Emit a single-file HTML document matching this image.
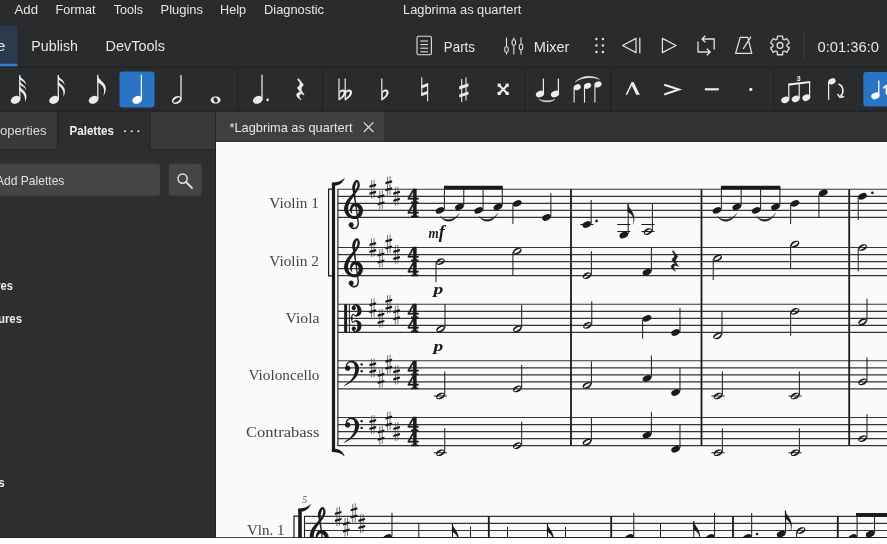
<!DOCTYPE html>
<html lang="en"><head><meta charset="utf-8"><title>Lagbrima as quartert</title>
<style>
html,body{margin:0;padding:0;}
body{width:887px;height:544px;overflow:hidden;background:#fff;position:relative;font-family:"Liberation Sans",sans-serif;}
#app{position:absolute;left:0;top:0;width:887px;height:538px;background:#2a2b2d;overflow:hidden;}
.abs{position:absolute;}
.t{position:absolute;white-space:nowrap;color:#e4e4e4;line-height:1;}
#page{position:absolute;left:215.5px;top:141.5px;width:672px;height:397px;background:#fafafa;}
svg{position:absolute;left:0;top:0;filter:blur(0.4px);}
</style></head><body>
<div id="app">
<div id="page"></div>
<svg width="887" height="544" viewBox="0 0 887 544">
<text x="14.5" y="13.8" font-family="'Liberation Sans', sans-serif" font-size="12.4" font-weight="400" fill="#e6e6e6" textLength="23.5" lengthAdjust="spacingAndGlyphs">Add</text>
<text x="55.5" y="13.8" font-family="'Liberation Sans', sans-serif" font-size="12.4" font-weight="400" fill="#e6e6e6" textLength="40" lengthAdjust="spacingAndGlyphs">Format</text>
<text x="113.8" y="13.8" font-family="'Liberation Sans', sans-serif" font-size="12.4" font-weight="400" fill="#e6e6e6" textLength="29.2" lengthAdjust="spacingAndGlyphs">Tools</text>
<text x="160.5" y="13.8" font-family="'Liberation Sans', sans-serif" font-size="12.4" font-weight="400" fill="#e6e6e6" textLength="42.5" lengthAdjust="spacingAndGlyphs">Plugins</text>
<text x="220" y="13.8" font-family="'Liberation Sans', sans-serif" font-size="12.4" font-weight="400" fill="#e6e6e6" textLength="26" lengthAdjust="spacingAndGlyphs">Help</text>
<text x="264" y="13.8" font-family="'Liberation Sans', sans-serif" font-size="12.4" font-weight="400" fill="#e6e6e6" textLength="60" lengthAdjust="spacingAndGlyphs">Diagnostic</text>
<text x="403" y="13.8" font-family="'Liberation Sans', sans-serif" font-size="12.4" font-weight="400" fill="#e6e6e6" textLength="118.3" lengthAdjust="spacingAndGlyphs">Lagbrima as quartert</text>
<rect x="0" y="26" width="17.5" height="40.5" fill="#2b3a4c"/>
<rect x="0" y="63.7" width="17.5" height="2.8" fill="#2f7fd6"/>
<text x="-40.5" y="51.3" font-family="'Liberation Sans', sans-serif" font-size="15" font-weight="400" fill="#e6e6e6" textLength="46" lengthAdjust="spacingAndGlyphs">Score</text>
<text x="31.3" y="51.3" font-family="'Liberation Sans', sans-serif" font-size="15" font-weight="400" fill="#e6e6e6" textLength="46.7" lengthAdjust="spacingAndGlyphs">Publish</text>
<text x="105.5" y="51.3" font-family="'Liberation Sans', sans-serif" font-size="15" font-weight="400" fill="#e6e6e6" textLength="59.5" lengthAdjust="spacingAndGlyphs">DevTools</text>
<text x="443.8" y="51.6" font-family="'Liberation Sans', sans-serif" font-size="14.5" font-weight="400" fill="#e6e6e6" textLength="31.2" lengthAdjust="spacingAndGlyphs">Parts</text>
<text x="533.8" y="51.6" font-family="'Liberation Sans', sans-serif" font-size="14.5" font-weight="400" fill="#e6e6e6" textLength="35.7" lengthAdjust="spacingAndGlyphs">Mixer</text>
<text x="817.5" y="51.7" font-family="'Liberation Sans', sans-serif" font-size="14.5" font-weight="400" fill="#e6e6e6" textLength="61.5" lengthAdjust="spacingAndGlyphs">0:01:36:0</text>
<rect x="0" y="66.6" width="887" height="1" fill="#222324"/>
<rect x="0" y="110.6" width="887" height="1.2" fill="#1f2021"/>
<rect x="803.6" y="32" width="1" height="27" fill="#3d3e40"/>
<rect x="237.5" y="68" width="1" height="42.5" fill="#1f2021"/>
<rect x="322" y="68" width="1" height="42.5" fill="#1f2021"/>
<rect x="524.5" y="68" width="1" height="42.5" fill="#1f2021"/>
<rect x="610.3" y="68" width="1" height="42.5" fill="#1f2021"/>
<rect x="773.5" y="68" width="1" height="42.5" fill="#1f2021"/>
<rect x="119.5" y="71.5" width="35" height="36" fill="#2a74c5" rx="3"/>
<rect x="863.3" y="72" width="30" height="34.5" fill="#2a74c5" rx="3"/>
<rect x="0" y="111.8" width="215.5" height="427" fill="#2d2e30"/>
<rect x="0" y="111.8" width="57.5" height="37.7" fill="#37393a"/>
<rect x="150" y="111.8" width="65.5" height="37.7" fill="#37393a"/>
<rect x="0" y="149.5" width="57.5" height="1" fill="#222324"/>
<rect x="150" y="149.5" width="65.5" height="1" fill="#222324"/>
<rect x="57" y="111.8" width="1" height="38" fill="#222324"/>
<rect x="149.5" y="111.8" width="1" height="38" fill="#222324"/>
<text x="-13.1" y="134.6" font-family="'Liberation Sans', sans-serif" font-size="12.4" font-weight="400" fill="#dcdcdc" textLength="59.6" lengthAdjust="spacingAndGlyphs">Properties</text>
<text x="69.5" y="134.6" font-family="'Liberation Sans', sans-serif" font-size="12.4" font-weight="700" fill="#f2f2f2" textLength="44.5" lengthAdjust="spacingAndGlyphs">Palettes</text>
<circle cx="125" cy="131.3" r="1.05" fill="#e0e0e0"/>
<circle cx="131.75" cy="131.3" r="1.05" fill="#e0e0e0"/>
<circle cx="138.4" cy="131.3" r="1.05" fill="#e0e0e0"/>
<rect x="-5" y="163.8" width="165" height="32" fill="#434547" rx="3"/>
<rect x="168.8" y="163.8" width="33" height="32" fill="#434547" rx="3"/>
<text x="-4" y="184.5" font-family="'Liberation Sans', sans-serif" font-size="12.4" font-weight="400" fill="#e0e0e0" textLength="68.4" lengthAdjust="spacingAndGlyphs">Add Palettes</text>
<circle cx="182.6" cy="178.6" r="4.6" fill="none" stroke="#e0e0e0" stroke-width="1.5"/><line x1="186" y1="182" x2="192" y2="188" stroke="#e0e0e0" stroke-width="1.8" stroke-linecap="round"/>
<rect x="215.5" y="111.8" width="672" height="29.7" fill="#303133"/>
<rect x="215.5" y="111.8" width="168.8" height="29.7" fill="#3e3f41"/>
<rect x="215" y="111.8" width="1" height="426" fill="#222324"/>
<text x="229.5" y="131.8" font-family="'Liberation Sans', sans-serif" font-size="12.4" font-weight="400" fill="#e6e6e6" textLength="123" lengthAdjust="spacingAndGlyphs">*Lagbrima as quartert</text>
<path d="M363.8 122.4 L373.4 132 M373.4 122.4 L363.8 132" stroke="#dcdcdc" stroke-width="1.2" fill="none"/>
<text x="-67" y="290.4" font-family="'Liberation Sans', sans-serif" font-size="12.4" font-weight="700" fill="#ececec" textLength="80" lengthAdjust="spacingAndGlyphs">Key signatures</text>
<text x="-65" y="323.2" font-family="'Liberation Sans', sans-serif" font-size="12.4" font-weight="700" fill="#ececec" textLength="87" lengthAdjust="spacingAndGlyphs">Time signatures</text>
<text x="-66" y="487.4" font-family="'Liberation Sans', sans-serif" font-size="12.4" font-weight="700" fill="#ececec" textLength="70.8" lengthAdjust="spacingAndGlyphs">Articulations</text>
<ellipse cx="15.6" cy="99.8" rx="5.1" ry="3.7" transform="rotate(-24 15.6 99.8)" fill="#ececec"/>
<line x1="19.8" y1="98.6" x2="19.8" y2="75" stroke="#ececec" stroke-width="1.25"/>
<path d="M19.3 75 C20.2 78.2 25.8 79.6 26.2 85 C25 82.6 22.4 80.6 19.3 79.2 Z" fill="#ececec"/>
<path d="M19.3 80.4 C20.2 83.6 25.8 85 26.2 90.4 C25 88 22.4 86 19.3 84.6 Z" fill="#ececec"/>
<path d="M19.3 85.8 C20.2 89.2 27.2 91.2 26.4 97.3 C26.2 99.3 25.6 100.8 24.8 102.3 C25.8 97.3 23.8 92.8 19.3 90.4 Z" fill="#ececec"/>
<ellipse cx="54.1" cy="99.8" rx="5.1" ry="3.7" transform="rotate(-24 54.1 99.8)" fill="#ececec"/>
<line x1="58.3" y1="98.6" x2="58.3" y2="75" stroke="#ececec" stroke-width="1.25"/>
<path d="M57.8 75 C58.7 78.2 64.3 79.6 64.7 85 C63.5 82.6 60.9 80.6 57.8 79.2 Z" fill="#ececec"/>
<path d="M57.8 80.4 C58.7 83.8 65.7 85.8 64.9 91.9 C64.7 93.9 64.1 95.4 63.3 96.9 C64.3 91.9 62.3 87.4 57.8 85 Z" fill="#ececec"/>
<ellipse cx="93.6" cy="99.8" rx="5.1" ry="3.7" transform="rotate(-24 93.6 99.8)" fill="#ececec"/>
<line x1="97.8" y1="98.6" x2="97.8" y2="74.8" stroke="#ececec" stroke-width="1.25"/>
<path d="M97.3 74.8 C98.4 80.3 106.6 82.8 105.8 89.3 C105.6 92.3 104.4 94.3 103.2 96.3 C104.8 91.3 104.4 87.3 101.2 84.8 C99.8 83.6 98.4 83 97.3 82.6 Z" fill="#ececec"/>
<ellipse cx="137.2" cy="99.8" rx="5.1" ry="3.7" transform="rotate(-24 137.2 99.8)" fill="#ffffff"/>
<line x1="141.4" y1="98.6" x2="141.4" y2="74.8" stroke="#ffffff" stroke-width="1.25"/>
<path d="M181.46 97.93 181.7 99.07 181.45 100.31 180.76 101.52 179.67 102.57 178.3 103.38 176.79 103.86 175.28 103.95 173.92 103.66 172.83 103.02 172.14 102.07 171.9 100.93 172.15 99.69 172.84 98.48 173.93 97.43 175.3 96.62 176.81 96.14 178.32 96.05 179.68 96.34 180.77 96.98ZM179.74 97.56 179.01 97.46 178.07 97.62 177 98.01 175.92 98.59 174.92 99.31 174.1 100.1 173.55 100.88 173.32 101.57 173.43 102.11 173.86 102.44 174.59 102.54 175.53 102.38 176.6 101.99 177.68 101.41 178.68 100.69 179.5 99.9 180.05 99.12 180.28 98.43 180.17 97.89Z" fill="#ececec" fill-rule="evenodd"/>
<line x1="181" y1="98.8" x2="181" y2="75" stroke="#ececec" stroke-width="1.25"/>
<path d="M220.6 100 220.36 101.11 219.65 102.12 218.54 102.91 217.15 103.42 215.6 103.6 214.05 103.42 212.66 102.91 211.55 102.12 210.84 101.11 210.6 100 210.84 98.89 211.55 97.88 212.66 97.09 214.05 96.58 215.6 96.4 217.15 96.58 218.54 97.09 219.65 97.88 220.36 98.89ZM216.75 98.37 216.14 97.86 215.47 97.55 214.82 97.48 214.25 97.66 213.81 98.07 213.54 98.67 213.48 99.39 213.62 100.18 213.95 100.95 214.45 101.63 215.06 102.14 215.73 102.45 216.38 102.52 216.95 102.34 217.39 101.93 217.66 101.33 217.72 100.61 217.58 99.82 217.25 99.05Z" fill="#ececec" fill-rule="evenodd"/>
<ellipse cx="257.8" cy="99.8" rx="5.1" ry="3.7" transform="rotate(-24 257.8 99.8)" fill="#ececec"/>
<line x1="262" y1="98.6" x2="262" y2="74.8" stroke="#ececec" stroke-width="1.25"/>
<circle cx="267.6" cy="99.9" r="1.3" fill="#ececec"/>
<path d="M298.39 78.6 L303.36 84.63 L301.37 87.47 L301.09 89.96 L304.07 94.93 L301.51 93.65 L299.1 94.93 L299.38 97.2 L301.09 99.9 L297.25 96.92 L296.54 94.22 L298.53 92.44 L300.8 92.66 L297.25 87.83 L299.95 84.99 L300.09 83 L297.68 79.31Z" fill="#ececec" stroke="#ececec" stroke-width="0.7" stroke-linejoin="round"/>
<path d="M339 78.6 V100.2" stroke="#ececec" stroke-width="1.2" fill="none"/>
<path d="M339.3 91.6 C342 88.4 346 89.2 345.8 92.8 C345.6 96.2 341.8 98.6 339.3 100.4 Z M339.9 93 V98 C342 96.4 343.6 94.8 343.6 92.6 C343.6 90.8 341.6 91.2 339.9 93 Z" fill="#ececec" fill-rule="evenodd"/>
<path d="M345.2 78.6 V100.2" stroke="#ececec" stroke-width="1.2" fill="none"/>
<path d="M345.5 91.6 C348.2 88.4 352.2 89.2 352 92.8 C351.8 96.2 348 98.6 345.5 100.4 Z M346.1 93 V98 C348.2 96.4 349.8 94.8 349.8 92.6 C349.8 90.8 347.8 91.2 346.1 93 Z" fill="#ececec" fill-rule="evenodd"/>
<path d="M381.8 78.6 V100.2" stroke="#ececec" stroke-width="1.2" fill="none"/>
<path d="M382.1 91.6 C384.8 88.4 388.8 89.2 388.6 92.8 C388.4 96.2 384.6 98.6 382.1 100.4 Z M382.7 93 V98 C384.8 96.4 386.4 94.8 386.4 92.6 C386.4 90.8 384.4 91.2 382.7 93 Z" fill="#ececec" fill-rule="evenodd"/>
<path d="M421.8 77.5 V95.6 M427.6 83.2 V101.3" stroke="#ececec" stroke-width="1.1" fill="none"/>
<path d="M421.3 85.4 L428.1 83 V86 L421.3 88.4 Z M421.3 93.2 L428.1 90.8 V93.8 L421.3 96.2 Z" fill="#ececec"/>
<path d="M461.7 79 V102 M466 77.6 V100.6" stroke="#ececec" stroke-width="1.1" fill="none"/>
<path d="M459.2 86.2 L468.5 83.2 V86.4 L459.2 89.4 Z M459.2 94.4 L468.5 91.4 V94.6 L459.2 97.6 Z" fill="#ececec"/>
<path d="M499.4 85.4 L507 93.2 M507 85.4 L499.4 93.2" stroke="#ececec" stroke-width="2.1" fill="none"/>
<rect x="497.6" y="83.6" width="3.2" height="3.2" fill="#ececec"/>
<rect x="505.6" y="83.6" width="3.2" height="3.2" fill="#ececec"/>
<rect x="497.6" y="91.8" width="3.2" height="3.2" fill="#ececec"/>
<rect x="505.6" y="91.8" width="3.2" height="3.2" fill="#ececec"/>
<ellipse cx="540" cy="94" rx="4.3" ry="3.1" transform="rotate(-24 540 94)" fill="#ececec"/>
<line x1="543.4" y1="92.8" x2="543.4" y2="78.6" stroke="#ececec" stroke-width="1.25"/>
<ellipse cx="555" cy="94" rx="4.3" ry="3.1" transform="rotate(-24 555 94)" fill="#ececec"/>
<line x1="558.4" y1="92.8" x2="558.4" y2="78.6" stroke="#ececec" stroke-width="1.25"/>
<path d="M539 99.2 C543 102.6 551 102.6 555 99.2 C551 101.4 543 101.4 539 99.2 Z" fill="#ececec" stroke="#ececec" stroke-width="0.5"/>
<ellipse cx="577.2" cy="87.2" rx="3.7" ry="2.8" transform="rotate(-24 577.2 87.2)" fill="#ececec"/>
<line x1="574.1" y1="88.2" x2="574.1" y2="102.6" stroke="#ececec" stroke-width="1.1"/>
<ellipse cx="587.6" cy="85.8" rx="3.7" ry="2.8" transform="rotate(-24 587.6 85.8)" fill="#ececec"/>
<line x1="584.5" y1="86.8" x2="584.5" y2="102.6" stroke="#ececec" stroke-width="1.1"/>
<ellipse cx="598" cy="84.4" rx="3.7" ry="2.8" transform="rotate(-24 598 84.4)" fill="#ececec"/>
<line x1="594.9" y1="85.4" x2="594.9" y2="102.6" stroke="#ececec" stroke-width="1.1"/>
<path d="M575.2 82 C581 75.4 593 74.6 599.4 79.4 C593 76.4 581 77.2 575.2 82 Z" fill="#ececec" stroke="#ececec" stroke-width="0.4"/>
<path d="M625.6 94.8 L631.6 82 H633.6 L639.8 94.8 H636.2 L631.8 85.6 L627.2 94.8 Z" fill="#ececec"/>
<path d="M664.2 84.8 L678.8 89.6 L664.2 94.4" stroke="#ececec" stroke-width="2.1" fill="none" stroke-linejoin="miter"/>
<rect x="704.8" y="88.2" width="14" height="2.2" fill="#ececec"/>
<circle cx="750.8" cy="89.4" r="1.65" fill="#ececec"/>
<ellipse cx="785.2" cy="99.9" rx="4.1" ry="3.1" transform="rotate(-24 785.2 99.9)" fill="#ececec"/>
<ellipse cx="795.7" cy="98.9" rx="4.1" ry="3.1" transform="rotate(-24 795.7 98.9)" fill="#ececec"/>
<ellipse cx="806.3" cy="97.7" rx="4.1" ry="3.1" transform="rotate(-24 806.3 97.7)" fill="#ececec"/>
<line x1="788.8" y1="99.2" x2="788.8" y2="84.6" stroke="#ececec" stroke-width="1.2"/>
<line x1="799.2" y1="98.2" x2="799.2" y2="83.3" stroke="#ececec" stroke-width="1.2"/>
<line x1="809.6" y1="97" x2="809.6" y2="82" stroke="#ececec" stroke-width="1.2"/>
<path d="M788.2 83.6 L810.2 80.9 V83.1 L788.2 85.8 Z" fill="#ececec"/>
<text x="796.4" y="80.6" font-family="'Liberation Sans', sans-serif" font-size="7.6" font-weight="700" fill="#ececec">3</text>
<ellipse cx="832" cy="81.3" rx="3.8" ry="2.9" transform="rotate(-24 832 81.3)" fill="#ececec"/>
<line x1="828.6" y1="82" x2="828.6" y2="99.8" stroke="#ececec" stroke-width="1.25"/>
<path d="M838.4 84 C843.6 86 844.4 92.6 840.4 96.6" stroke="#ececec" stroke-width="1.5" fill="none"/><path d="M837.6 94 L840 97.4 L844.2 96.6" stroke="#ececec" stroke-width="1.5" fill="none"/>
<ellipse cx="875.4" cy="95.8" rx="4.3" ry="3.2" transform="rotate(-24 875.4 95.8)" fill="#ffffff"/>
<line x1="878.8" y1="94.6" x2="878.8" y2="80.4" stroke="#ffffff" stroke-width="1.25"/>
<path d="M886.4 85 V94.5 M883.2 88.4 L886.4 85.2" stroke="#ffffff" stroke-width="1.5" fill="none"/>
<rect x="417" y="36.2" width="14.4" height="18.6" rx="1.6" fill="none" stroke="#e0e0e0" stroke-width="1.1"/>
<line x1="420.4" y1="41" x2="428" y2="41" stroke="#e0e0e0" stroke-width="1.1"/>
<line x1="420.4" y1="44.6" x2="428" y2="44.6" stroke="#e0e0e0" stroke-width="1.1"/>
<line x1="420.4" y1="48.2" x2="428" y2="48.2" stroke="#e0e0e0" stroke-width="1.1"/>
<line x1="420.4" y1="51.8" x2="428" y2="51.8" stroke="#e0e0e0" stroke-width="1.1"/>
<line x1="506.5" y1="37.6" x2="506.5" y2="46.9" stroke="#e0e0e0" stroke-width="1.1"/><line x1="506.5" y1="52.1" x2="506.5" y2="54.6" stroke="#e0e0e0" stroke-width="1.1"/><rect x="504.8" y="46.7" width="3.4" height="5.6" rx="1.6" fill="none" stroke="#e0e0e0" stroke-width="1.1"/>
<line x1="513.8" y1="37.6" x2="513.8" y2="39.9" stroke="#e0e0e0" stroke-width="1.1"/><line x1="513.8" y1="45.1" x2="513.8" y2="54.6" stroke="#e0e0e0" stroke-width="1.1"/><rect x="512.0999999999999" y="39.7" width="3.4" height="5.6" rx="1.6" fill="none" stroke="#e0e0e0" stroke-width="1.1"/>
<line x1="521" y1="37.6" x2="521" y2="44.4" stroke="#e0e0e0" stroke-width="1.1"/><line x1="521" y1="49.6" x2="521" y2="54.6" stroke="#e0e0e0" stroke-width="1.1"/><rect x="519.3" y="44.2" width="3.4" height="5.6" rx="1.6" fill="none" stroke="#e0e0e0" stroke-width="1.1"/>
<circle cx="596.4" cy="39" r="1.2" fill="#e0e0e0"/>
<circle cx="596.4" cy="45.5" r="1.2" fill="#e0e0e0"/>
<circle cx="596.4" cy="52" r="1.2" fill="#e0e0e0"/>
<circle cx="602.9" cy="39" r="1.2" fill="#e0e0e0"/>
<circle cx="602.9" cy="45.5" r="1.2" fill="#e0e0e0"/>
<circle cx="602.9" cy="52" r="1.2" fill="#e0e0e0"/>
<path d="M636 38.4 L622.6 45.5 L636 52.6 Z" fill="none" stroke="#e0e0e0" stroke-width="1.25" stroke-linejoin="round"/><line x1="639.8" y1="37.8" x2="639.8" y2="53.2" stroke="#e0e0e0" stroke-width="1.3"/>
<path d="M662.4 38.4 L676 45.5 L662.4 52.6 Z" fill="none" stroke="#e0e0e0" stroke-width="1.25" stroke-linejoin="round"/>
<path d="M698 41.4 V52 H710 M706.8 48.8 L710.2 52 L706.8 55.2 M714.2 49.6 V39 H702.2 M705.4 35.8 L702 39 L705.4 42.2" fill="none" stroke="#e0e0e0" stroke-width="1.3" stroke-linejoin="round"/>
<path d="M740.2 37.4 H747.8 L751.8 53.3 H735.6 Z M743.2 48.8 L751 36.6" fill="none" stroke="#e0e0e0" stroke-width="1.25" stroke-linejoin="round"/>
<path d="M786.95 46.26 L789.39 47.83 L786.8 52.31 L784.22 50.98 L782.73 51.85 L782.59 54.75 L777.41 54.75 L777.27 51.85 L775.78 50.98 L773.2 52.31 L770.61 47.83 L773.05 46.26 L773.05 44.54 L770.61 42.97 L773.2 38.49 L775.78 39.82 L777.27 38.95 L777.41 36.05 L782.59 36.05 L782.73 38.95 L784.22 39.82 L786.8 38.49 L789.39 42.97 L786.95 44.54 Z" fill="none" stroke="#e0e0e0" stroke-width="1.3" stroke-linejoin="round"/><circle cx="780" cy="45.4" r="2.9" fill="none" stroke="#e0e0e0" stroke-width="1.3"/>
<line x1="337.9" y1="189.25" x2="887" y2="189.25" stroke="#333333" stroke-width="1.2" stroke-linecap="butt"/>
<line x1="337.9" y1="196.3" x2="887" y2="196.3" stroke="#333333" stroke-width="1.2" stroke-linecap="butt"/>
<line x1="337.9" y1="203.35" x2="887" y2="203.35" stroke="#333333" stroke-width="1.2" stroke-linecap="butt"/>
<line x1="337.9" y1="210.4" x2="887" y2="210.4" stroke="#333333" stroke-width="1.2" stroke-linecap="butt"/>
<line x1="337.9" y1="217.45" x2="887" y2="217.45" stroke="#333333" stroke-width="1.2" stroke-linecap="butt"/>
<line x1="337.9" y1="247.5" x2="887" y2="247.5" stroke="#333333" stroke-width="1.2" stroke-linecap="butt"/>
<line x1="337.9" y1="254.55" x2="887" y2="254.55" stroke="#333333" stroke-width="1.2" stroke-linecap="butt"/>
<line x1="337.9" y1="261.6" x2="887" y2="261.6" stroke="#333333" stroke-width="1.2" stroke-linecap="butt"/>
<line x1="337.9" y1="268.65" x2="887" y2="268.65" stroke="#333333" stroke-width="1.2" stroke-linecap="butt"/>
<line x1="337.9" y1="275.7" x2="887" y2="275.7" stroke="#333333" stroke-width="1.2" stroke-linecap="butt"/>
<line x1="337.9" y1="304.25" x2="887" y2="304.25" stroke="#333333" stroke-width="1.2" stroke-linecap="butt"/>
<line x1="337.9" y1="311.3" x2="887" y2="311.3" stroke="#333333" stroke-width="1.2" stroke-linecap="butt"/>
<line x1="337.9" y1="318.35" x2="887" y2="318.35" stroke="#333333" stroke-width="1.2" stroke-linecap="butt"/>
<line x1="337.9" y1="325.4" x2="887" y2="325.4" stroke="#333333" stroke-width="1.2" stroke-linecap="butt"/>
<line x1="337.9" y1="332.45" x2="887" y2="332.45" stroke="#333333" stroke-width="1.2" stroke-linecap="butt"/>
<line x1="337.9" y1="360.75" x2="887" y2="360.75" stroke="#333333" stroke-width="1.2" stroke-linecap="butt"/>
<line x1="337.9" y1="367.8" x2="887" y2="367.8" stroke="#333333" stroke-width="1.2" stroke-linecap="butt"/>
<line x1="337.9" y1="374.85" x2="887" y2="374.85" stroke="#333333" stroke-width="1.2" stroke-linecap="butt"/>
<line x1="337.9" y1="381.9" x2="887" y2="381.9" stroke="#333333" stroke-width="1.2" stroke-linecap="butt"/>
<line x1="337.9" y1="388.95" x2="887" y2="388.95" stroke="#333333" stroke-width="1.2" stroke-linecap="butt"/>
<line x1="337.9" y1="417.5" x2="887" y2="417.5" stroke="#333333" stroke-width="1.2" stroke-linecap="butt"/>
<line x1="337.9" y1="424.55" x2="887" y2="424.55" stroke="#333333" stroke-width="1.2" stroke-linecap="butt"/>
<line x1="337.9" y1="431.6" x2="887" y2="431.6" stroke="#333333" stroke-width="1.2" stroke-linecap="butt"/>
<line x1="337.9" y1="438.65" x2="887" y2="438.65" stroke="#333333" stroke-width="1.2" stroke-linecap="butt"/>
<line x1="337.9" y1="445.7" x2="887" y2="445.7" stroke="#333333" stroke-width="1.2" stroke-linecap="butt"/>
<line x1="571" y1="189.25" x2="571" y2="445.7" stroke="#1a1a1a" stroke-width="1.8" stroke-linecap="butt"/>
<line x1="701.5" y1="189.25" x2="701.5" y2="445.7" stroke="#1a1a1a" stroke-width="1.8" stroke-linecap="butt"/>
<line x1="849.2" y1="189.25" x2="849.2" y2="445.7" stroke="#1a1a1a" stroke-width="1.8" stroke-linecap="butt"/>
<line x1="337.9" y1="188.85" x2="337.9" y2="446.1" stroke="#1a1a1a" stroke-width="1.1" stroke-linecap="butt"/>
<rect x="331.9" y="183.5" width="3.2" height="267.7" fill="#1a1a1a"/>
<path d="M331.9 185.5 L331.9 182.5 C337 182.5 341.5 181.3 344.8 177.8 C343.2 182.8 339 185.6 335.1 185.6 Z" fill="#1a1a1a"/>
<path d="M331.9 448.7 L331.9 451.9 C337 451.9 341.5 453.1 344.8 456.6 C343.2 451.6 339 448.8 335.1 448.8 Z" fill="#1a1a1a"/>
<path d="M332 189.05 H328.6 V275.9 H332" fill="none" stroke="#151515" stroke-width="1.15"/>
<path d="M352.32 213.22 352.27 212.97 352.19 212.67 352.09 212.33 351.99 211.95 351.9 211.56 351.83 211.16 351.78 210.77 351.78 210.41 351.81 210.1 351.89 209.83 352.01 209.51 352.17 209.12 352.37 208.71 352.6 208.28 352.86 207.87 353.12 207.48 353.4 207.13 353.66 206.85 353.9 206.66 354.08 206.55 354.28 206.47 354.52 206.39 354.79 206.32 355.09 206.27 355.39 206.25 355.69 206.26 355.97 206.29 356.22 206.35 356.43 206.42 356.59 206.52 356.78 206.66 357.03 206.89 357.32 207.18 357.62 207.52 357.9 207.89 358.16 208.28 358.39 208.67 358.56 209.03 358.68 209.35 358.75 209.6 358.8 209.88 358.82 210.25 358.82 210.68 358.79 211.15 358.73 211.64 358.64 212.13 358.52 212.59 358.39 213.02 358.24 213.4 358.08 213.7 357.9 213.99 357.66 214.3 357.38 214.62 357.05 214.93 356.69 215.22 356.32 215.48 355.93 215.7 355.54 215.87 355.17 216 354.82 216.06 354.43 216.07 353.98 216.04 353.47 215.95 352.94 215.81 352.4 215.63 351.87 215.4 351.37 215.15 350.9 214.86 350.49 214.57 350.15 214.26 349.84 213.92 349.53 213.51 349.25 213.06 348.98 212.57 348.74 212.05 348.54 211.52 348.37 210.99 348.24 210.46 348.14 209.96 348.08 209.48 348.06 209 348.07 208.47 348.12 207.9 348.2 207.29 348.32 206.66 348.46 206.01 348.64 205.34 348.84 204.68 349.07 204.02 349.3 203.4 349.55 202.81 349.84 202.22 350.18 201.62 350.55 200.99 350.96 200.36 351.39 199.72 351.83 199.08 352.29 198.42 352.75 197.76 353.18 197.11 353.61 196.49 354.05 195.87 354.52 195.24 354.99 194.61 355.47 193.99 355.94 193.36 356.4 192.73 356.84 192.1 357.25 191.48 357.62 190.86 357.95 190.26 358.26 189.68 358.56 189.1 358.84 188.52 359.09 187.95 359.31 187.38 359.51 186.81 359.66 186.24 359.77 185.67 359.83 185.1 359.83 184.5 359.75 183.9 359.63 183.32 359.46 182.75 359.26 182.22 359.03 181.73 358.79 181.28 358.54 180.87 358.26 180.52 357.9 180.19 357.41 179.96 356.89 179.9 356.43 179.98 356.01 180.14 355.63 180.34 355.27 180.59 354.93 180.88 354.61 181.2 354.31 181.55 354.04 181.92 353.79 182.32 353.55 182.75 353.31 183.22 353.08 183.73 352.87 184.27 352.68 184.85 352.51 185.45 352.37 186.08 352.27 186.72 352.21 187.38 352.21 188.03 352.25 188.66 352.33 189.29 352.44 189.91 352.58 190.54 352.73 191.19 352.9 191.88 353.06 192.62 353.23 193.42 353.39 194.3 353.56 195.28 353.74 196.33 353.93 197.46 354.13 198.64 354.33 199.86 354.54 201.12 354.75 202.4 354.96 203.69 355.16 204.98 355.35 206.26 355.55 207.58 355.76 208.98 355.97 210.44 356.18 211.92 356.38 213.39 356.58 214.83 356.76 216.21 356.93 217.49 357.07 218.64 357.19 219.64 357.28 220.49 357.37 221.2 357.44 221.8 357.49 222.3 357.52 222.72 357.54 223.07 357.53 223.39 357.51 223.69 357.46 224 357.39 224.35 357.29 224.72 357.17 225.09 357.03 225.44 356.86 225.78 356.68 226.1 356.49 226.39 356.29 226.65 356.08 226.88 355.88 227.06 355.69 227.2 355.48 227.3 355.23 227.39 354.94 227.46 354.61 227.5 354.26 227.53 353.91 227.53 353.56 227.51 353.23 227.48 352.93 227.44 352.7 227.39 352.52 227.34 352.34 227.25 352.13 227.11 351.92 226.94 351.7 226.75 351.49 226.54 351.3 226.33 351.11 226.14 350.94 225.96 350.79 225.82 349.89 226.7 349.98 226.81 350.09 226.98 350.25 227.19 350.43 227.44 350.63 227.72 350.87 228 351.15 228.28 351.46 228.54 351.82 228.78 352.21 228.94 352.6 229.04 353 229.12 353.43 229.17 353.87 229.19 354.33 229.18 354.79 229.15 355.26 229.07 355.71 228.96 356.15 228.79 356.56 228.57 356.92 228.3 357.24 227.98 357.53 227.64 357.79 227.27 358.03 226.87 358.23 226.45 358.42 226.01 358.57 225.56 358.7 225.11 358.8 224.65 358.87 224.21 358.91 223.81 358.92 223.41 358.9 223.01 358.86 222.6 358.8 222.15 358.73 221.63 358.64 221.04 358.55 220.33 358.44 219.49 358.31 218.48 358.16 217.32 357.98 216.04 357.79 214.66 357.59 213.22 357.38 211.75 357.17 210.27 356.97 208.81 356.78 207.4 356.61 206.08 356.44 204.8 356.27 203.5 356.11 202.21 355.94 200.92 355.78 199.65 355.64 198.42 355.5 197.24 355.38 196.11 355.27 195.05 355.18 194.07 355.11 193.17 355.05 192.34 355.01 191.58 354.98 190.89 354.97 190.25 354.96 189.66 354.98 189.11 355.01 188.6 355.04 188.09 355.09 187.59 355.16 187.09 355.24 186.59 355.33 186.1 355.44 185.61 355.56 185.13 355.68 184.68 355.82 184.25 355.96 183.85 356.1 183.49 356.23 183.18 356.36 182.91 356.5 182.65 356.64 182.41 356.79 182.19 356.92 182.01 357.03 181.88 357.1 181.8 357.09 181.77 356.99 181.74 356.88 181.67 356.88 181.69 356.98 181.85 357.1 182.12 357.21 182.47 357.32 182.87 357.41 183.29 357.47 183.73 357.5 184.17 357.51 184.57 357.49 184.94 357.44 185.32 357.37 185.74 357.27 186.18 357.14 186.65 356.98 187.14 356.8 187.65 356.58 188.16 356.33 188.69 356.06 189.23 355.75 189.76 355.42 190.28 355.03 190.81 354.6 191.36 354.13 191.92 353.63 192.49 353.11 193.07 352.58 193.67 352.05 194.27 351.52 194.88 351.02 195.49 350.53 196.07 350.03 196.65 349.5 197.24 348.97 197.83 348.43 198.45 347.9 199.08 347.38 199.74 346.88 200.43 346.42 201.15 346.02 201.89 345.67 202.63 345.34 203.38 345.04 204.15 344.77 204.94 344.53 205.75 344.34 206.57 344.19 207.4 344.1 208.24 344.08 209.08 344.14 209.91 344.28 210.72 344.5 211.52 344.78 212.29 345.12 213.03 345.51 213.73 345.94 214.41 346.41 215.04 346.91 215.64 347.44 216.19 347.99 216.69 348.6 217.15 349.25 217.56 349.93 217.92 350.64 218.24 351.37 218.52 352.11 218.74 352.84 218.92 353.58 219.05 354.31 219.12 355.03 219.12 355.75 219.05 356.45 218.9 357.14 218.69 357.82 218.43 358.47 218.11 359.09 217.75 359.68 217.34 360.24 216.89 360.75 216.39 361.21 215.84 361.61 215.23 361.96 214.58 362.26 213.89 362.5 213.17 362.7 212.44 362.85 211.69 362.94 210.94 362.97 210.18 362.92 209.42 362.8 208.66 362.56 207.91 362.24 207.21 361.85 206.56 361.41 205.95 360.93 205.38 360.43 204.86 359.9 204.39 359.35 203.96 358.79 203.59 358.19 203.28 357.56 203.05 356.91 202.9 356.27 202.84 355.64 202.84 355.02 202.9 354.41 203.02 353.83 203.2 353.27 203.43 352.74 203.73 352.24 204.1 351.78 204.55 351.4 205.06 351.07 205.6 350.8 206.17 350.56 206.74 350.35 207.33 350.19 207.91 350.06 208.48 349.97 209.03 349.92 209.56 349.94 210.11 350.04 210.65 350.2 211.15 350.4 211.61 350.61 212.04 350.83 212.43 351.04 212.78 351.22 213.08 351.37 213.32 351.46 213.51Z" fill="#1a1a1a"/>
<path d="M353.72 224.85 353.53 225.82 352.98 226.65 352.16 227.2 351.19 227.39 350.21 227.2 349.39 226.65 348.84 225.82 348.65 224.85 348.84 223.88 349.39 223.06 350.21 222.51 351.19 222.31 352.16 222.51 352.98 223.06 353.53 223.88Z" fill="#1a1a1a"/>
<path d="M352.32 271.47 352.27 271.22 352.19 270.92 352.09 270.58 351.99 270.2 351.9 269.81 351.83 269.41 351.78 269.02 351.78 268.66 351.81 268.35 351.89 268.08 352.01 267.76 352.17 267.37 352.37 266.96 352.6 266.53 352.86 266.12 353.12 265.73 353.4 265.38 353.66 265.1 353.9 264.91 354.08 264.8 354.28 264.72 354.52 264.64 354.79 264.57 355.09 264.52 355.39 264.5 355.69 264.51 355.97 264.54 356.22 264.6 356.43 264.67 356.59 264.77 356.78 264.91 357.03 265.14 357.32 265.43 357.62 265.77 357.9 266.14 358.16 266.53 358.39 266.92 358.56 267.28 358.68 267.6 358.75 267.85 358.8 268.13 358.82 268.5 358.82 268.93 358.79 269.4 358.73 269.89 358.64 270.38 358.52 270.84 358.39 271.27 358.24 271.65 358.08 271.95 357.9 272.24 357.66 272.55 357.38 272.87 357.05 273.18 356.69 273.47 356.32 273.73 355.93 273.95 355.54 274.12 355.17 274.25 354.82 274.31 354.43 274.32 353.98 274.29 353.47 274.2 352.94 274.06 352.4 273.88 351.87 273.65 351.37 273.4 350.9 273.11 350.49 272.82 350.15 272.51 349.84 272.17 349.53 271.76 349.25 271.31 348.98 270.82 348.74 270.3 348.54 269.77 348.37 269.24 348.24 268.71 348.14 268.21 348.08 267.73 348.06 267.25 348.07 266.72 348.12 266.15 348.2 265.54 348.32 264.91 348.46 264.26 348.64 263.59 348.84 262.93 349.07 262.27 349.3 261.65 349.55 261.06 349.84 260.47 350.18 259.87 350.55 259.24 350.96 258.61 351.39 257.97 351.83 257.33 352.29 256.67 352.75 256.01 353.18 255.36 353.61 254.74 354.05 254.12 354.52 253.49 354.99 252.86 355.47 252.24 355.94 251.61 356.4 250.98 356.84 250.35 357.25 249.73 357.62 249.11 357.95 248.51 358.26 247.93 358.56 247.35 358.84 246.77 359.09 246.2 359.31 245.63 359.51 245.06 359.66 244.49 359.77 243.92 359.83 243.35 359.83 242.75 359.75 242.15 359.63 241.57 359.46 241 359.26 240.47 359.03 239.98 358.79 239.53 358.54 239.12 358.26 238.77 357.9 238.44 357.41 238.21 356.89 238.15 356.43 238.23 356.01 238.39 355.63 238.59 355.27 238.84 354.93 239.13 354.61 239.45 354.31 239.8 354.04 240.17 353.79 240.57 353.55 241 353.31 241.47 353.08 241.98 352.87 242.52 352.68 243.1 352.51 243.7 352.37 244.33 352.27 244.97 352.21 245.63 352.21 246.28 352.25 246.91 352.33 247.54 352.44 248.16 352.58 248.79 352.73 249.44 352.9 250.13 353.06 250.87 353.23 251.67 353.39 252.55 353.56 253.53 353.74 254.58 353.93 255.71 354.13 256.89 354.33 258.11 354.54 259.37 354.75 260.65 354.96 261.94 355.16 263.23 355.35 264.51 355.55 265.83 355.76 267.23 355.97 268.69 356.18 270.17 356.38 271.64 356.58 273.08 356.76 274.46 356.93 275.74 357.07 276.89 357.19 277.89 357.28 278.74 357.37 279.45 357.44 280.05 357.49 280.55 357.52 280.97 357.54 281.32 357.53 281.64 357.51 281.94 357.46 282.25 357.39 282.6 357.29 282.97 357.17 283.34 357.03 283.69 356.86 284.03 356.68 284.35 356.49 284.64 356.29 284.9 356.08 285.13 355.88 285.31 355.69 285.45 355.48 285.55 355.23 285.64 354.94 285.71 354.61 285.75 354.26 285.78 353.91 285.78 353.56 285.76 353.23 285.73 352.93 285.69 352.7 285.64 352.52 285.59 352.34 285.5 352.13 285.36 351.92 285.19 351.7 285 351.49 284.79 351.3 284.58 351.11 284.39 350.94 284.21 350.79 284.07 349.89 284.95 349.98 285.06 350.09 285.23 350.25 285.44 350.43 285.69 350.63 285.97 350.87 286.25 351.15 286.53 351.46 286.79 351.82 287.03 352.21 287.19 352.6 287.29 353 287.37 353.43 287.42 353.87 287.44 354.33 287.43 354.79 287.4 355.26 287.32 355.71 287.21 356.15 287.04 356.56 286.82 356.92 286.55 357.24 286.23 357.53 285.89 357.79 285.52 358.03 285.12 358.23 284.7 358.42 284.26 358.57 283.81 358.7 283.36 358.8 282.9 358.87 282.46 358.91 282.06 358.92 281.66 358.9 281.26 358.86 280.85 358.8 280.4 358.73 279.88 358.64 279.29 358.55 278.58 358.44 277.74 358.31 276.73 358.16 275.57 357.98 274.29 357.79 272.91 357.59 271.47 357.38 270 357.17 268.52 356.97 267.06 356.78 265.65 356.61 264.33 356.44 263.05 356.27 261.75 356.11 260.46 355.94 259.17 355.78 257.9 355.64 256.67 355.5 255.49 355.38 254.36 355.27 253.3 355.18 252.32 355.11 251.42 355.05 250.59 355.01 249.83 354.98 249.14 354.97 248.5 354.96 247.91 354.98 247.36 355.01 246.85 355.04 246.34 355.09 245.84 355.16 245.34 355.24 244.84 355.33 244.35 355.44 243.86 355.56 243.38 355.68 242.93 355.82 242.5 355.96 242.1 356.1 241.74 356.23 241.43 356.36 241.16 356.5 240.9 356.64 240.66 356.79 240.44 356.92 240.26 357.03 240.13 357.1 240.05 357.09 240.02 356.99 239.99 356.88 239.92 356.88 239.94 356.98 240.1 357.1 240.37 357.21 240.72 357.32 241.12 357.41 241.54 357.47 241.98 357.5 242.42 357.51 242.82 357.49 243.19 357.44 243.57 357.37 243.99 357.27 244.43 357.14 244.9 356.98 245.39 356.8 245.9 356.58 246.41 356.33 246.94 356.06 247.48 355.75 248.01 355.42 248.53 355.03 249.06 354.6 249.61 354.13 250.17 353.63 250.74 353.11 251.32 352.58 251.92 352.05 252.52 351.52 253.13 351.02 253.74 350.53 254.32 350.03 254.9 349.5 255.49 348.97 256.08 348.43 256.7 347.9 257.33 347.38 257.99 346.88 258.68 346.42 259.4 346.02 260.14 345.67 260.88 345.34 261.63 345.04 262.4 344.77 263.19 344.53 264 344.34 264.82 344.19 265.65 344.1 266.49 344.08 267.33 344.14 268.16 344.28 268.97 344.5 269.77 344.78 270.54 345.12 271.28 345.51 271.98 345.94 272.66 346.41 273.29 346.91 273.89 347.44 274.44 347.99 274.94 348.6 275.4 349.25 275.81 349.93 276.17 350.64 276.49 351.37 276.77 352.11 276.99 352.84 277.17 353.58 277.3 354.31 277.37 355.03 277.37 355.75 277.3 356.45 277.15 357.14 276.94 357.82 276.68 358.47 276.36 359.09 276 359.68 275.59 360.24 275.14 360.75 274.64 361.21 274.09 361.61 273.48 361.96 272.83 362.26 272.14 362.5 271.42 362.7 270.69 362.85 269.94 362.94 269.19 362.97 268.43 362.92 267.67 362.8 266.91 362.56 266.16 362.24 265.46 361.85 264.81 361.41 264.2 360.93 263.63 360.43 263.11 359.9 262.64 359.35 262.21 358.79 261.84 358.19 261.53 357.56 261.3 356.91 261.15 356.27 261.09 355.64 261.09 355.02 261.15 354.41 261.27 353.83 261.45 353.27 261.68 352.74 261.98 352.24 262.35 351.78 262.8 351.4 263.31 351.07 263.85 350.8 264.42 350.56 264.99 350.35 265.58 350.19 266.16 350.06 266.73 349.97 267.28 349.92 267.81 349.94 268.36 350.04 268.9 350.2 269.4 350.4 269.86 350.61 270.29 350.83 270.68 351.04 271.03 351.22 271.33 351.37 271.57 351.46 271.76Z" fill="#1a1a1a"/>
<path d="M353.72 283.1 353.53 284.07 352.98 284.9 352.16 285.45 351.19 285.64 350.21 285.45 349.39 284.9 348.84 284.07 348.65 283.1 348.84 282.13 349.39 281.31 350.21 280.76 351.19 280.56 352.16 280.76 352.98 281.31 353.53 282.13Z" fill="#1a1a1a"/>
<path d="M344.15 304.25h2.96v28.2h-2.96Z" fill="#1a1a1a"/>
<path d="M348.88 304.25h0.99v28.2h-0.99Z" fill="#1a1a1a"/>
<path d="M351.46 318.33 351.57 318.08 351.71 317.73 351.86 317.32 352.02 316.87 352.21 316.4 352.4 315.95 352.61 315.55 352.81 315.23 352.98 315.03 353.06 314.98 353.03 315 353.1 315.03 353.29 315.13 353.55 315.32 353.85 315.56 354.18 315.83 354.54 316.1 354.94 316.35 355.41 316.53 355.94 316.58 356.43 316.53 356.92 316.45 357.44 316.33 357.98 316.16 358.54 315.94 359.1 315.67 359.64 315.32 360.16 314.9 360.62 314.37 360.99 313.75 361.23 313.07 361.38 312.39 361.45 311.69 361.46 310.99 361.41 310.29 361.31 309.59 361.16 308.92 360.97 308.26 360.73 307.64 360.45 307.05 360.09 306.51 359.66 306.02 359.19 305.58 358.69 305.2 358.17 304.87 357.65 304.59 357.12 304.36 356.59 304.19 356.08 304.08 355.55 304.04 355 304.14 354.52 304.37 354.11 304.66 353.73 304.99 353.38 305.34 353.05 305.69 352.76 306.03 352.5 306.32 352.3 306.55 352.15 306.7 352.8 307.44 353 307.28 353.26 307.04 353.54 306.76 353.84 306.47 354.17 306.17 354.5 305.91 354.82 305.7 355.11 305.57 355.32 305.54 355.43 305.59 355.57 305.7 355.78 305.88 356.01 306.13 356.25 306.44 356.49 306.78 356.7 307.15 356.89 307.52 357.05 307.88 357.16 308.22 357.23 308.5 357.29 308.8 357.34 309.18 357.39 309.62 357.42 310.09 357.44 310.57 357.44 311.04 357.43 311.48 357.4 311.87 357.37 312.18 357.36 312.38 357.35 312.56 357.31 312.81 357.21 313.12 357.07 313.48 356.87 313.84 356.65 314.19 356.4 314.52 356.15 314.81 355.89 315.04 355.71 315.19 355.6 315.25 355.42 315.23 355.17 315.12 354.88 314.92 354.57 314.68 354.25 314.42 353.92 314.17 353.54 313.96 353.08 313.85 352.56 313.97 352.18 314.28 351.92 314.67 351.71 315.12 351.52 315.6 351.36 316.1 351.22 316.6 351.09 317.08 350.98 317.5 350.88 317.84 350.81 318.08Z" fill="#1a1a1a"/>
<path d="M351.46 318.37 351.57 318.62 351.71 318.97 351.86 319.38 352.02 319.83 352.21 320.3 352.4 320.75 352.61 321.15 352.81 321.47 352.98 321.67 353.06 321.72 353.03 321.7 353.1 321.67 353.29 321.57 353.55 321.38 353.85 321.14 354.18 320.87 354.54 320.6 354.94 320.35 355.41 320.17 355.94 320.12 356.43 320.17 356.92 320.25 357.44 320.37 357.98 320.54 358.54 320.76 359.1 321.03 359.64 321.38 360.16 321.8 360.62 322.33 360.99 322.95 361.23 323.63 361.38 324.31 361.45 325.01 361.46 325.71 361.41 326.41 361.31 327.11 361.16 327.78 360.97 328.44 360.73 329.06 360.45 329.65 360.09 330.19 359.66 330.68 359.19 331.12 358.69 331.5 358.17 331.83 357.65 332.11 357.12 332.34 356.59 332.51 356.08 332.62 355.55 332.66 355 332.56 354.52 332.33 354.11 332.04 353.73 331.71 353.38 331.36 353.05 331.01 352.76 330.67 352.5 330.38 352.3 330.15 352.15 330 352.8 329.26 353 329.42 353.26 329.66 353.54 329.94 353.84 330.23 354.17 330.53 354.5 330.79 354.82 331 355.11 331.13 355.32 331.16 355.43 331.11 355.57 331 355.78 330.82 356.01 330.57 356.25 330.26 356.49 329.92 356.7 329.55 356.89 329.18 357.05 328.82 357.16 328.48 357.23 328.2 357.29 327.9 357.34 327.52 357.39 327.08 357.42 326.61 357.44 326.13 357.44 325.66 357.43 325.22 357.4 324.83 357.37 324.52 357.36 324.32 357.35 324.14 357.31 323.89 357.21 323.58 357.07 323.22 356.87 322.86 356.65 322.51 356.4 322.18 356.15 321.89 355.89 321.66 355.71 321.51 355.6 321.45 355.42 321.47 355.17 321.58 354.88 321.78 354.57 322.02 354.25 322.28 353.92 322.53 353.54 322.74 353.08 322.85 352.56 322.73 352.18 322.42 351.92 322.03 351.71 321.58 351.52 321.1 351.36 320.6 351.22 320.1 351.09 319.62 350.98 319.2 350.88 318.86 350.81 318.62Z" fill="#1a1a1a"/>
<path d="M355.93 308.13 355.72 309.05 355.13 309.78 354.28 310.19 353.34 310.19 352.49 309.78 351.91 309.05 351.7 308.13 351.91 307.21 352.49 306.47 353.34 306.07 354.28 306.07 355.13 306.47 355.72 307.21Z" fill="#1a1a1a"/>
<path d="M355.93 328.57 355.72 329.49 355.13 330.23 354.28 330.63 353.34 330.63 352.49 330.23 351.91 329.49 351.7 328.57 351.91 327.65 352.49 326.92 353.34 326.51 354.28 326.51 355.13 326.92 355.72 327.65Z" fill="#1a1a1a"/>
<path d="M349.79 318.35L352.61 316.38L352.61 320.32Z" fill="#1a1a1a"/>
<path d="M347.86 368.39 347.79 368.14 347.68 367.81 347.55 367.43 347.41 367.01 347.27 366.58 347.16 366.14 347.08 365.72 347.05 365.35 347.07 365.05 347.14 364.83 347.27 364.59 347.46 364.31 347.71 364 348 363.68 348.34 363.38 348.7 363.09 349.07 362.85 349.45 362.64 349.82 362.5 350.16 362.42 350.52 362.39 350.91 362.4 351.33 362.44 351.75 362.52 352.17 362.64 352.57 362.79 352.93 362.98 353.26 363.19 353.52 363.42 353.74 363.68 353.94 363.99 354.16 364.38 354.36 364.82 354.54 365.3 354.7 365.8 354.83 366.32 354.93 366.83 355 367.33 355.05 367.81 355.07 368.27 355.08 368.76 355.06 369.33 355.02 369.97 354.96 370.65 354.86 371.36 354.73 372.09 354.58 372.82 354.39 373.54 354.19 374.24 353.95 374.9 353.7 375.52 353.4 376.15 353.07 376.79 352.7 377.42 352.31 378.04 351.88 378.66 351.43 379.26 350.96 379.85 350.47 380.42 349.97 380.97 349.43 381.5 348.8 382.03 348.12 382.57 347.4 383.09 346.67 383.59 345.97 384.06 345.3 384.5 344.7 384.88 344.2 385.21 343.81 385.48 344.19 386.08 344.59 385.86 345.11 385.58 345.74 385.25 346.45 384.89 347.21 384.48 348 384.05 348.8 383.59 349.58 383.11 350.32 382.62 351 382.13 351.62 381.63 352.24 381.12 352.85 380.59 353.45 380.03 354.04 379.46 354.61 378.86 355.16 378.24 355.67 377.59 356.16 376.91 356.61 376.21 357.02 375.49 357.42 374.73 357.79 373.93 358.14 373.11 358.45 372.28 358.72 371.43 358.93 370.58 359.08 369.73 359.16 368.88 359.15 368.04 359.04 367.21 358.83 366.4 358.55 365.65 358.2 364.94 357.79 364.27 357.36 363.67 356.89 363.11 356.41 362.61 355.92 362.17 355.41 361.77 354.87 361.43 354.29 361.17 353.7 360.98 353.1 360.85 352.51 360.78 351.93 360.76 351.37 360.78 350.83 360.83 350.31 360.93 349.82 361.05 349.34 361.23 348.86 361.46 348.39 361.73 347.93 362.04 347.5 362.38 347.09 362.75 346.72 363.13 346.4 363.54 346.13 363.97 345.94 364.43 345.85 364.94 345.88 365.46 345.99 365.96 346.16 366.45 346.36 366.92 346.57 367.36 346.77 367.76 346.96 368.12 347.1 368.4 347.19 368.62Z" fill="#1a1a1a"/>
<path d="M350.35 368.15 350.14 369.18 349.56 370.05 348.69 370.63 347.67 370.83 346.64 370.63 345.77 370.05 345.19 369.18 344.99 368.15 345.19 367.13 345.77 366.26 346.64 365.68 347.67 365.47 348.69 365.68 349.56 366.26 350.14 367.13Z" fill="#1a1a1a"/>
<path d="M362.89 364.42 362.8 364.9 362.52 365.31 362.11 365.59 361.62 365.69 361.14 365.59 360.73 365.31 360.45 364.9 360.36 364.42 360.45 363.93 360.73 363.52 361.14 363.24 361.62 363.15 362.11 363.24 362.52 363.52 362.8 363.93Z" fill="#1a1a1a"/>
<path d="M362.89 371.18 362.8 371.67 362.52 372.08 362.11 372.36 361.62 372.45 361.14 372.36 360.73 372.08 360.45 371.67 360.36 371.18 360.45 370.7 360.73 370.29 361.14 370.01 361.62 369.92 362.11 370.01 362.52 370.29 362.8 370.7Z" fill="#1a1a1a"/>
<path d="M347.86 425.14 347.79 424.89 347.68 424.56 347.55 424.18 347.41 423.76 347.27 423.33 347.16 422.89 347.08 422.47 347.05 422.1 347.07 421.8 347.14 421.58 347.27 421.34 347.46 421.06 347.71 420.75 348 420.43 348.34 420.13 348.7 419.84 349.07 419.6 349.45 419.39 349.82 419.25 350.16 419.17 350.52 419.14 350.91 419.15 351.33 419.19 351.75 419.27 352.17 419.39 352.57 419.54 352.93 419.73 353.26 419.94 353.52 420.17 353.74 420.43 353.94 420.74 354.16 421.13 354.36 421.57 354.54 422.05 354.7 422.55 354.83 423.07 354.93 423.58 355 424.08 355.05 424.56 355.07 425.02 355.08 425.51 355.06 426.08 355.02 426.72 354.96 427.4 354.86 428.11 354.73 428.84 354.58 429.57 354.39 430.29 354.19 430.99 353.95 431.65 353.7 432.27 353.4 432.9 353.07 433.54 352.7 434.17 352.31 434.79 351.88 435.41 351.43 436.01 350.96 436.6 350.47 437.17 349.97 437.72 349.43 438.25 348.8 438.78 348.12 439.32 347.4 439.84 346.67 440.34 345.97 440.81 345.3 441.25 344.7 441.63 344.2 441.96 343.81 442.23 344.19 442.83 344.59 442.61 345.11 442.33 345.74 442 346.45 441.64 347.21 441.23 348 440.8 348.8 440.34 349.58 439.86 350.32 439.37 351 438.88 351.62 438.38 352.24 437.87 352.85 437.34 353.45 436.78 354.04 436.21 354.61 435.61 355.16 434.99 355.67 434.34 356.16 433.66 356.61 432.96 357.02 432.24 357.42 431.48 357.79 430.68 358.14 429.86 358.45 429.03 358.72 428.18 358.93 427.33 359.08 426.48 359.16 425.63 359.15 424.79 359.04 423.96 358.83 423.15 358.55 422.4 358.2 421.69 357.79 421.02 357.36 420.42 356.89 419.86 356.41 419.36 355.92 418.92 355.41 418.52 354.87 418.18 354.29 417.92 353.7 417.73 353.1 417.6 352.51 417.53 351.93 417.51 351.37 417.53 350.83 417.58 350.31 417.68 349.82 417.8 349.34 417.98 348.86 418.21 348.39 418.48 347.93 418.79 347.5 419.13 347.09 419.5 346.72 419.88 346.4 420.29 346.13 420.72 345.94 421.18 345.85 421.69 345.88 422.21 345.99 422.71 346.16 423.2 346.36 423.67 346.57 424.11 346.77 424.51 346.96 424.87 347.1 425.15 347.19 425.37Z" fill="#1a1a1a"/>
<path d="M350.35 424.9 350.14 425.93 349.56 426.8 348.69 427.38 347.67 427.58 346.64 427.38 345.77 426.8 345.19 425.93 344.99 424.9 345.19 423.88 345.77 423.01 346.64 422.43 347.67 422.22 348.69 422.43 349.56 423.01 350.14 423.88Z" fill="#1a1a1a"/>
<path d="M362.89 421.17 362.8 421.65 362.52 422.06 362.11 422.34 361.62 422.44 361.14 422.34 360.73 422.06 360.45 421.65 360.36 421.17 360.45 420.68 360.73 420.27 361.14 419.99 361.62 419.9 362.11 419.99 362.52 420.27 362.8 420.68Z" fill="#1a1a1a"/>
<path d="M362.89 427.93 362.8 428.42 362.52 428.83 362.11 429.11 361.62 429.2 361.14 429.11 360.73 428.83 360.45 428.42 360.36 427.93 360.45 427.45 360.73 427.04 361.14 426.76 361.62 426.67 362.11 426.76 362.52 427.04 362.8 427.45Z" fill="#1a1a1a"/>
<path d="M371.55 180.26 V198.84 M374.05 179.66 V198.24" stroke="#3a3a3a" stroke-width="0.7" fill="none"/>
<path d="M369.45 185.53 L376.15 183.72 V185.92 L369.45 187.72 Z" fill="#1a1a1a"/>
<path d="M369.45 192.58 L376.15 190.78 V192.97 L369.45 194.78 Z" fill="#1a1a1a"/>
<path d="M379.75 190.84 V209.41 M382.25 190.24 V208.81" stroke="#3a3a3a" stroke-width="0.7" fill="none"/>
<path d="M377.65 196.1 L384.35 194.3 V196.5 L377.65 198.3 Z" fill="#1a1a1a"/>
<path d="M377.65 203.15 L384.35 201.35 V203.55 L377.65 205.35 Z" fill="#1a1a1a"/>
<path d="M387.55 176.74 V195.31 M390.05 176.14 V194.71" stroke="#3a3a3a" stroke-width="0.7" fill="none"/>
<path d="M385.45 182 L392.15 180.2 V182.4 L385.45 184.2 Z" fill="#1a1a1a"/>
<path d="M385.45 189.05 L392.15 187.25 V189.45 L385.45 191.25 Z" fill="#1a1a1a"/>
<path d="M395.35 187.31 V205.89 M397.85 186.71 V205.29" stroke="#3a3a3a" stroke-width="0.7" fill="none"/>
<path d="M393.25 192.58 L399.95 190.78 V192.97 L393.25 194.78 Z" fill="#1a1a1a"/>
<path d="M393.25 199.63 L399.95 197.83 V200.03 L393.25 201.83 Z" fill="#1a1a1a"/>
<text x="407.3" y="203.2" font-family="'DejaVu Serif', serif" font-size="19.2" font-weight="700" fill="#1a1a1a" textLength="11.9" lengthAdjust="spacingAndGlyphs" stroke="#1a1a1a" stroke-width="0.55">4</text>
<text x="407.3" y="217.3" font-family="'DejaVu Serif', serif" font-size="19.2" font-weight="700" fill="#1a1a1a" textLength="11.9" lengthAdjust="spacingAndGlyphs" stroke="#1a1a1a" stroke-width="0.55">4</text>
<path d="M371.55 238.51 V257.09 M374.05 237.91 V256.49" stroke="#3a3a3a" stroke-width="0.7" fill="none"/>
<path d="M369.45 243.78 L376.15 241.97 V244.17 L369.45 245.97 Z" fill="#1a1a1a"/>
<path d="M369.45 250.83 L376.15 249.03 V251.22 L369.45 253.03 Z" fill="#1a1a1a"/>
<path d="M379.75 249.09 V267.66 M382.25 248.49 V267.06" stroke="#3a3a3a" stroke-width="0.7" fill="none"/>
<path d="M377.65 254.35 L384.35 252.55 V254.75 L377.65 256.55 Z" fill="#1a1a1a"/>
<path d="M377.65 261.4 L384.35 259.6 V261.8 L377.65 263.6 Z" fill="#1a1a1a"/>
<path d="M387.55 234.99 V253.56 M390.05 234.39 V252.96" stroke="#3a3a3a" stroke-width="0.7" fill="none"/>
<path d="M385.45 240.25 L392.15 238.45 V240.65 L385.45 242.45 Z" fill="#1a1a1a"/>
<path d="M385.45 247.3 L392.15 245.5 V247.7 L385.45 249.5 Z" fill="#1a1a1a"/>
<path d="M395.35 245.56 V264.14 M397.85 244.96 V263.54" stroke="#3a3a3a" stroke-width="0.7" fill="none"/>
<path d="M393.25 250.83 L399.95 249.03 V251.22 L393.25 253.03 Z" fill="#1a1a1a"/>
<path d="M393.25 257.87 L399.95 256.07 V258.28 L393.25 260.07 Z" fill="#1a1a1a"/>
<text x="407.3" y="261.45" font-family="'DejaVu Serif', serif" font-size="19.2" font-weight="700" fill="#1a1a1a" textLength="11.9" lengthAdjust="spacingAndGlyphs" stroke="#1a1a1a" stroke-width="0.55">4</text>
<text x="407.3" y="275.55" font-family="'DejaVu Serif', serif" font-size="19.2" font-weight="700" fill="#1a1a1a" textLength="11.9" lengthAdjust="spacingAndGlyphs" stroke="#1a1a1a" stroke-width="0.55">4</text>
<path d="M371.55 298.79 V317.36 M374.05 298.19 V316.76" stroke="#3a3a3a" stroke-width="0.7" fill="none"/>
<path d="M369.45 304.05 L376.15 302.25 V304.45 L369.45 306.25 Z" fill="#1a1a1a"/>
<path d="M369.45 311.1 L376.15 309.3 V311.5 L369.45 313.3 Z" fill="#1a1a1a"/>
<path d="M379.75 309.36 V327.94 M382.25 308.76 V327.34" stroke="#3a3a3a" stroke-width="0.7" fill="none"/>
<path d="M377.65 314.62 L384.35 312.83 V315.03 L377.65 316.83 Z" fill="#1a1a1a"/>
<path d="M377.65 321.67 L384.35 319.88 V322.08 L377.65 323.88 Z" fill="#1a1a1a"/>
<path d="M387.55 295.26 V313.84 M390.05 294.66 V313.24" stroke="#3a3a3a" stroke-width="0.7" fill="none"/>
<path d="M385.45 300.52 L392.15 298.73 V300.93 L385.45 302.73 Z" fill="#1a1a1a"/>
<path d="M385.45 307.57 L392.15 305.77 V307.98 L385.45 309.77 Z" fill="#1a1a1a"/>
<path d="M395.35 305.84 V324.41 M397.85 305.24 V323.81" stroke="#3a3a3a" stroke-width="0.7" fill="none"/>
<path d="M393.25 311.1 L399.95 309.3 V311.5 L393.25 313.3 Z" fill="#1a1a1a"/>
<path d="M393.25 318.15 L399.95 316.35 V318.55 L393.25 320.35 Z" fill="#1a1a1a"/>
<text x="407.3" y="318.2" font-family="'DejaVu Serif', serif" font-size="19.2" font-weight="700" fill="#1a1a1a" textLength="11.9" lengthAdjust="spacingAndGlyphs" stroke="#1a1a1a" stroke-width="0.55">4</text>
<text x="407.3" y="332.3" font-family="'DejaVu Serif', serif" font-size="19.2" font-weight="700" fill="#1a1a1a" textLength="11.9" lengthAdjust="spacingAndGlyphs" stroke="#1a1a1a" stroke-width="0.55">4</text>
<path d="M371.55 358.81 V377.39 M374.05 358.21 V376.79" stroke="#3a3a3a" stroke-width="0.7" fill="none"/>
<path d="M369.45 364.07 L376.15 362.28 V364.48 L369.45 366.28 Z" fill="#1a1a1a"/>
<path d="M369.45 371.12 L376.15 369.32 V371.53 L369.45 373.32 Z" fill="#1a1a1a"/>
<path d="M379.75 369.39 V387.96 M382.25 368.79 V387.36" stroke="#3a3a3a" stroke-width="0.7" fill="none"/>
<path d="M377.65 374.65 L384.35 372.85 V375.05 L377.65 376.85 Z" fill="#1a1a1a"/>
<path d="M377.65 381.7 L384.35 379.9 V382.1 L377.65 383.9 Z" fill="#1a1a1a"/>
<path d="M387.55 355.29 V373.86 M390.05 354.69 V373.26" stroke="#3a3a3a" stroke-width="0.7" fill="none"/>
<path d="M385.45 360.55 L392.15 358.75 V360.95 L385.45 362.75 Z" fill="#1a1a1a"/>
<path d="M385.45 367.6 L392.15 365.8 V368 L385.45 369.8 Z" fill="#1a1a1a"/>
<path d="M395.35 365.86 V384.44 M397.85 365.26 V383.84" stroke="#3a3a3a" stroke-width="0.7" fill="none"/>
<path d="M393.25 371.12 L399.95 369.33 V371.53 L393.25 373.33 Z" fill="#1a1a1a"/>
<path d="M393.25 378.17 L399.95 376.38 V378.58 L393.25 380.38 Z" fill="#1a1a1a"/>
<text x="407.3" y="374.7" font-family="'DejaVu Serif', serif" font-size="19.2" font-weight="700" fill="#1a1a1a" textLength="11.9" lengthAdjust="spacingAndGlyphs" stroke="#1a1a1a" stroke-width="0.55">4</text>
<text x="407.3" y="388.8" font-family="'DejaVu Serif', serif" font-size="19.2" font-weight="700" fill="#1a1a1a" textLength="11.9" lengthAdjust="spacingAndGlyphs" stroke="#1a1a1a" stroke-width="0.55">4</text>
<path d="M371.55 415.56 V434.14 M374.05 414.96 V433.54" stroke="#3a3a3a" stroke-width="0.7" fill="none"/>
<path d="M369.45 420.82 L376.15 419.03 V421.23 L369.45 423.03 Z" fill="#1a1a1a"/>
<path d="M369.45 427.87 L376.15 426.07 V428.28 L369.45 430.07 Z" fill="#1a1a1a"/>
<path d="M379.75 426.14 V444.71 M382.25 425.54 V444.11" stroke="#3a3a3a" stroke-width="0.7" fill="none"/>
<path d="M377.65 431.4 L384.35 429.6 V431.8 L377.65 433.6 Z" fill="#1a1a1a"/>
<path d="M377.65 438.45 L384.35 436.65 V438.85 L377.65 440.65 Z" fill="#1a1a1a"/>
<path d="M387.55 412.04 V430.61 M390.05 411.44 V430.01" stroke="#3a3a3a" stroke-width="0.7" fill="none"/>
<path d="M385.45 417.3 L392.15 415.5 V417.7 L385.45 419.5 Z" fill="#1a1a1a"/>
<path d="M385.45 424.35 L392.15 422.55 V424.75 L385.45 426.55 Z" fill="#1a1a1a"/>
<path d="M395.35 422.61 V441.19 M397.85 422.01 V440.59" stroke="#3a3a3a" stroke-width="0.7" fill="none"/>
<path d="M393.25 427.88 L399.95 426.08 V428.28 L393.25 430.08 Z" fill="#1a1a1a"/>
<path d="M393.25 434.92 L399.95 433.12 V435.33 L393.25 437.12 Z" fill="#1a1a1a"/>
<text x="407.3" y="431.45" font-family="'DejaVu Serif', serif" font-size="19.2" font-weight="700" fill="#1a1a1a" textLength="11.9" lengthAdjust="spacingAndGlyphs" stroke="#1a1a1a" stroke-width="0.55">4</text>
<text x="407.3" y="445.55" font-family="'DejaVu Serif', serif" font-size="19.2" font-weight="700" fill="#1a1a1a" textLength="11.9" lengthAdjust="spacingAndGlyphs" stroke="#1a1a1a" stroke-width="0.55">4</text>
<text x="269.3" y="208" font-family="'Liberation Serif', serif" font-size="13.6" font-weight="400" fill="#444" textLength="49.7" lengthAdjust="spacingAndGlyphs">Violin 1</text>
<text x="269.3" y="266" font-family="'Liberation Serif', serif" font-size="13.6" font-weight="400" fill="#444" textLength="49.7" lengthAdjust="spacingAndGlyphs">Violin 2</text>
<text x="285.5" y="323" font-family="'Liberation Serif', serif" font-size="13.6" font-weight="400" fill="#444" textLength="34" lengthAdjust="spacingAndGlyphs">Viola</text>
<text x="248.5" y="380" font-family="'Liberation Serif', serif" font-size="13.6" font-weight="400" fill="#444" textLength="71" lengthAdjust="spacingAndGlyphs">Violoncello</text>
<text x="246" y="437" font-family="'Liberation Serif', serif" font-size="13.6" font-weight="400" fill="#444" textLength="73.5" lengthAdjust="spacingAndGlyphs">Contrabass</text>
<text x="428.6" y="237.8" font-family="'Liberation Serif', serif" font-size="14.4" font-weight="700" font-style="italic" fill="#1a1a1a" textLength="10.2" lengthAdjust="spacingAndGlyphs">m</text>
<text x="438.8" y="238.4" font-family="'Liberation Serif', serif" font-size="18" font-weight="700" font-style="italic" fill="#1a1a1a">f</text>
<text x="433.5" y="293.9" font-family="'Liberation Serif', serif" font-size="15.5" font-weight="700" font-style="italic" fill="#1a1a1a" textLength="9.7" lengthAdjust="spacingAndGlyphs">p</text>
<text x="433.5" y="350.6" font-family="'Liberation Serif', serif" font-size="15.5" font-weight="700" font-style="italic" fill="#1a1a1a" textLength="9.7" lengthAdjust="spacingAndGlyphs">p</text>
<ellipse cx="440" cy="210.4" rx="4.58" ry="2.96" transform="rotate(-24 440 210.4)" fill="#1a1a1a"/>
<line x1="444.38" y1="209.4" x2="444.38" y2="187" stroke="#1a1a1a" stroke-width="1" stroke-linecap="butt"/>
<ellipse cx="459.4" cy="206.88" rx="4.58" ry="2.96" transform="rotate(-24 459.4 206.88)" fill="#1a1a1a"/>
<line x1="463.78" y1="205.88" x2="463.78" y2="187" stroke="#1a1a1a" stroke-width="1" stroke-linecap="butt"/>
<ellipse cx="478.7" cy="210.4" rx="4.58" ry="2.96" transform="rotate(-24 478.7 210.4)" fill="#1a1a1a"/>
<line x1="483.08" y1="209.4" x2="483.08" y2="187" stroke="#1a1a1a" stroke-width="1" stroke-linecap="butt"/>
<ellipse cx="497.9" cy="206.88" rx="4.58" ry="2.96" transform="rotate(-24 497.9 206.88)" fill="#1a1a1a"/>
<line x1="502.28" y1="205.88" x2="502.28" y2="187" stroke="#1a1a1a" stroke-width="1" stroke-linecap="butt"/>
<path d="M444 185.7 L502.7 185.7 V189.4 L444 189.4 Z" fill="#1a1a1a"/>
<path d="M440.4 216.3 C445.15 221.72 454.65 220.17 459.4 213.2 C454.65 222.47 445.15 224.03 440.4 216.3 Z" fill="#1a1a1a" stroke="#1a1a1a" stroke-width="0.35"/>
<path d="M479.1 216.3 C483.8 221.72 493.2 220.17 497.9 213.2 C493.2 222.47 483.8 224.03 479.1 216.3 Z" fill="#1a1a1a" stroke="#1a1a1a" stroke-width="0.35"/>
<ellipse cx="517.3" cy="203.35" rx="4.58" ry="2.96" transform="rotate(-24 517.3 203.35)" fill="#1a1a1a"/>
<line x1="512.92" y1="204.35" x2="512.92" y2="224" stroke="#1a1a1a" stroke-width="1" stroke-linecap="butt"/>
<ellipse cx="546.5" cy="217.45" rx="4.58" ry="2.96" transform="rotate(-24 546.5 217.45)" fill="#1a1a1a"/>
<line x1="550.88" y1="216.45" x2="550.88" y2="193.2" stroke="#1a1a1a" stroke-width="1" stroke-linecap="butt"/>
<line x1="580.22" y1="224.5" x2="593.38" y2="224.5" stroke="#1a1a1a" stroke-width="1" stroke-linecap="butt"/>
<ellipse cx="586.8" cy="224.5" rx="4.58" ry="2.96" transform="rotate(-24 586.8 224.5)" fill="#1a1a1a"/>
<line x1="591.18" y1="223.5" x2="591.18" y2="200" stroke="#1a1a1a" stroke-width="1" stroke-linecap="butt"/>
<circle cx="596.58" cy="220.97" r="1.35" fill="#1a1a1a"/>
<line x1="617.22" y1="224.5" x2="630.38" y2="224.5" stroke="#1a1a1a" stroke-width="1" stroke-linecap="butt"/>
<line x1="617.22" y1="231.55" x2="630.38" y2="231.55" stroke="#1a1a1a" stroke-width="1" stroke-linecap="butt"/>
<ellipse cx="623.8" cy="235.07" rx="4.58" ry="2.96" transform="rotate(-24 623.8 235.07)" fill="#1a1a1a"/>
<line x1="628.18" y1="234.07" x2="628.18" y2="203.8" stroke="#1a1a1a" stroke-width="1" stroke-linecap="butt"/>
<path d="M627.73 203.8 C628.58 209.3 637.18 213.3 633.18 224.3 C635.38 216.8 630.68 213.4 627.73 212 Z" fill="#1a1a1a" stroke="#1a1a1a" stroke-width="0.3"/>
<line x1="641.42" y1="224.5" x2="654.58" y2="224.5" stroke="#1a1a1a" stroke-width="1" stroke-linecap="butt"/>
<line x1="641.42" y1="231.55" x2="654.58" y2="231.55" stroke="#1a1a1a" stroke-width="1" stroke-linecap="butt"/>
<path d="M652.19 229.69 652.36 230.63 652.11 231.66 651.45 232.69 650.46 233.6 649.23 234.31 647.87 234.75 646.53 234.88 645.34 234.68 644.4 234.18 643.81 233.41 643.64 232.47 643.89 231.44 644.55 230.41 645.54 229.5 646.77 228.79 648.13 228.35 649.47 228.22 650.66 228.42 651.6 228.92ZM650.75 229.38 650.13 229.36 649.29 229.55 648.33 229.95 647.34 230.5 646.41 231.15 645.64 231.84 645.1 232.5 644.84 233.07 644.89 233.49 645.25 233.72 645.87 233.74 646.71 233.55 647.67 233.15 648.66 232.6 649.59 231.95 650.36 231.26 650.9 230.6 651.16 230.03 651.11 229.61Z" fill="#1a1a1a" fill-rule="evenodd"/>
<line x1="652.38" y1="230.55" x2="652.38" y2="203.8" stroke="#1a1a1a" stroke-width="1" stroke-linecap="butt"/>
<ellipse cx="717" cy="210.4" rx="4.58" ry="2.96" transform="rotate(-24 717 210.4)" fill="#1a1a1a"/>
<line x1="721.38" y1="209.4" x2="721.38" y2="187" stroke="#1a1a1a" stroke-width="1" stroke-linecap="butt"/>
<ellipse cx="736.8" cy="206.88" rx="4.58" ry="2.96" transform="rotate(-24 736.8 206.88)" fill="#1a1a1a"/>
<line x1="741.18" y1="205.88" x2="741.18" y2="187" stroke="#1a1a1a" stroke-width="1" stroke-linecap="butt"/>
<ellipse cx="756.2" cy="210.4" rx="4.58" ry="2.96" transform="rotate(-24 756.2 210.4)" fill="#1a1a1a"/>
<line x1="760.58" y1="209.4" x2="760.58" y2="187" stroke="#1a1a1a" stroke-width="1" stroke-linecap="butt"/>
<ellipse cx="775.5" cy="206.88" rx="4.58" ry="2.96" transform="rotate(-24 775.5 206.88)" fill="#1a1a1a"/>
<line x1="779.88" y1="205.88" x2="779.88" y2="187" stroke="#1a1a1a" stroke-width="1" stroke-linecap="butt"/>
<path d="M721 185.7 L780.3 185.7 V189.4 L721 189.4 Z" fill="#1a1a1a"/>
<path d="M717.4 216.3 C722.25 221.72 731.95 220.17 736.8 213.2 C731.95 222.47 722.25 224.03 717.4 216.3 Z" fill="#1a1a1a" stroke="#1a1a1a" stroke-width="0.35"/>
<path d="M756.6 216.3 C761.33 221.72 770.77 220.17 775.5 213.2 C770.77 222.47 761.33 224.03 756.6 216.3 Z" fill="#1a1a1a" stroke="#1a1a1a" stroke-width="0.35"/>
<ellipse cx="795" cy="203.35" rx="4.58" ry="2.96" transform="rotate(-24 795 203.35)" fill="#1a1a1a"/>
<line x1="790.62" y1="204.35" x2="790.62" y2="224" stroke="#1a1a1a" stroke-width="1" stroke-linecap="butt"/>
<ellipse cx="823.3" cy="192.78" rx="4.58" ry="2.96" transform="rotate(-24 823.3 192.78)" fill="#1a1a1a"/>
<line x1="818.92" y1="193.78" x2="818.92" y2="217.5" stroke="#1a1a1a" stroke-width="1" stroke-linecap="butt"/>
<ellipse cx="862.6" cy="196.3" rx="4.58" ry="2.96" transform="rotate(-24 862.6 196.3)" fill="#1a1a1a"/>
<line x1="858.22" y1="197.3" x2="858.22" y2="220" stroke="#1a1a1a" stroke-width="1" stroke-linecap="butt"/>
<circle cx="872.38" cy="192.78" r="1.35" fill="#1a1a1a"/>
<path d="M444.59 259.74 444.76 260.68 444.51 261.71 443.85 262.74 442.86 263.65 441.63 264.36 440.27 264.8 438.93 264.93 437.74 264.73 436.8 264.23 436.21 263.46 436.04 262.52 436.29 261.49 436.95 260.46 437.94 259.55 439.17 258.84 440.53 258.4 441.87 258.27 443.06 258.47 444 258.97ZM443.15 259.43 442.53 259.41 441.69 259.6 440.73 260 439.74 260.55 438.81 261.2 438.04 261.89 437.5 262.55 437.24 263.12 437.29 263.54 437.65 263.77 438.27 263.79 439.11 263.6 440.07 263.2 441.06 262.65 441.99 262 442.76 261.31 443.3 260.65 443.56 260.08 443.51 259.66Z" fill="#1a1a1a" fill-rule="evenodd"/>
<line x1="436.02" y1="262.6" x2="436.02" y2="282.3" stroke="#1a1a1a" stroke-width="1" stroke-linecap="butt"/>
<path d="M521.49 249.16 521.66 250.1 521.41 251.14 520.75 252.16 519.76 253.07 518.53 253.78 517.17 254.23 515.83 254.35 514.64 254.15 513.7 253.65 513.11 252.89 512.94 251.95 513.19 250.91 513.85 249.89 514.84 248.98 516.07 248.27 517.43 247.82 518.77 247.7 519.96 247.9 520.9 248.4ZM520.05 248.85 519.43 248.83 518.59 249.03 517.63 249.42 516.64 249.97 515.71 250.62 514.94 251.31 514.4 251.98 514.14 252.55 514.19 252.97 514.55 253.2 515.17 253.22 516.01 253.02 516.97 252.63 517.96 252.08 518.89 251.43 519.66 250.74 520.2 250.07 520.46 249.5 520.41 249.08Z" fill="#1a1a1a" fill-rule="evenodd"/>
<line x1="512.92" y1="252.03" x2="512.92" y2="275" stroke="#1a1a1a" stroke-width="1" stroke-linecap="butt"/>
<path d="M591.19 273.84 591.36 274.78 591.11 275.81 590.45 276.84 589.46 277.75 588.23 278.46 586.87 278.9 585.53 279.03 584.34 278.83 583.4 278.33 582.81 277.56 582.64 276.62 582.89 275.59 583.55 274.56 584.54 273.65 585.77 272.94 587.13 272.5 588.47 272.37 589.66 272.57 590.6 273.07ZM589.75 273.53 589.13 273.51 588.29 273.7 587.33 274.1 586.34 274.65 585.41 275.3 584.64 275.99 584.1 276.65 583.84 277.22 583.89 277.64 584.25 277.87 584.87 277.89 585.71 277.7 586.67 277.3 587.66 276.75 588.59 276.1 589.36 275.41 589.9 274.75 590.16 274.18 590.11 273.76Z" fill="#1a1a1a" fill-rule="evenodd"/>
<line x1="591.38" y1="274.7" x2="591.38" y2="251.3" stroke="#1a1a1a" stroke-width="1" stroke-linecap="butt"/>
<ellipse cx="647" cy="272.18" rx="4.58" ry="2.96" transform="rotate(-24 647 272.18)" fill="#1a1a1a"/>
<line x1="651.38" y1="271.18" x2="651.38" y2="247.5" stroke="#1a1a1a" stroke-width="1" stroke-linecap="butt"/>
<path d="M672.93 250.58 L677.77 256.45 L675.84 259.21 L675.56 261.63 L678.46 266.47 L675.97 265.22 L673.63 266.47 L673.9 268.68 L675.56 271.3 L671.83 268.4 L671.14 265.78 L673.07 264.05 L675.28 264.26 L671.83 259.56 L674.45 256.8 L674.59 254.86 L672.24 251.27Z" fill="#1a1a1a" stroke="#1a1a1a" stroke-width="0.5" stroke-linejoin="round"/>
<path d="M721.79 256.21 721.96 257.15 721.71 258.19 721.05 259.21 720.06 260.12 718.83 260.83 717.47 261.28 716.13 261.4 714.94 261.2 714 260.7 713.41 259.94 713.24 259 713.49 257.96 714.15 256.94 715.14 256.03 716.37 255.32 717.73 254.87 719.07 254.75 720.26 254.95 721.2 255.45ZM720.35 255.9 719.73 255.88 718.89 256.08 717.93 256.47 716.94 257.02 716.01 257.67 715.24 258.36 714.7 259.03 714.44 259.6 714.49 260.02 714.85 260.25 715.47 260.27 716.31 260.07 717.27 259.68 718.26 259.13 719.19 258.48 719.96 257.79 720.5 257.12 720.76 256.55 720.71 256.13Z" fill="#1a1a1a" fill-rule="evenodd"/>
<line x1="713.22" y1="259.07" x2="713.22" y2="280" stroke="#1a1a1a" stroke-width="1" stroke-linecap="butt"/>
<path d="M799.19 242.11 799.36 243.05 799.11 244.09 798.45 245.11 797.46 246.02 796.23 246.73 794.87 247.18 793.53 247.3 792.34 247.1 791.4 246.6 790.81 245.84 790.64 244.9 790.89 243.86 791.55 242.84 792.54 241.93 793.77 241.22 795.13 240.77 796.47 240.65 797.66 240.85 798.6 241.35ZM797.75 241.8 797.13 241.78 796.29 241.98 795.33 242.37 794.34 242.92 793.41 243.57 792.64 244.26 792.1 244.93 791.84 245.5 791.89 245.92 792.25 246.15 792.87 246.17 793.71 245.97 794.67 245.58 795.66 245.03 796.59 244.38 797.36 243.69 797.9 243.02 798.16 242.45 798.11 242.03Z" fill="#1a1a1a" fill-rule="evenodd"/>
<line x1="790.62" y1="244.97" x2="790.62" y2="268.8" stroke="#1a1a1a" stroke-width="1" stroke-linecap="butt"/>
<path d="M866.79 245.64 866.96 246.58 866.71 247.61 866.05 248.64 865.06 249.55 863.83 250.26 862.47 250.7 861.13 250.83 859.94 250.63 859 250.13 858.41 249.36 858.24 248.42 858.49 247.39 859.15 246.36 860.14 245.45 861.37 244.74 862.73 244.3 864.07 244.17 865.26 244.37 866.2 244.87ZM865.35 245.33 864.73 245.31 863.89 245.5 862.93 245.9 861.94 246.45 861.01 247.1 860.24 247.79 859.7 248.45 859.44 249.02 859.49 249.44 859.85 249.67 860.47 249.69 861.31 249.5 862.27 249.1 863.26 248.55 864.19 247.9 864.96 247.21 865.5 246.55 865.76 245.98 865.71 245.56Z" fill="#1a1a1a" fill-rule="evenodd"/>
<line x1="858.22" y1="248.5" x2="858.22" y2="271.3" stroke="#1a1a1a" stroke-width="1" stroke-linecap="butt"/>
<path d="M444.79 327.06 444.96 328 444.71 329.04 444.05 330.06 443.06 330.97 441.83 331.68 440.47 332.13 439.13 332.25 437.94 332.05 437 331.55 436.41 330.79 436.24 329.85 436.49 328.81 437.15 327.79 438.14 326.88 439.37 326.17 440.73 325.72 442.07 325.6 443.26 325.8 444.2 326.3ZM443.35 326.75 442.73 326.73 441.89 326.93 440.93 327.32 439.94 327.87 439.01 328.52 438.24 329.21 437.7 329.88 437.44 330.45 437.49 330.87 437.85 331.1 438.47 331.12 439.31 330.92 440.27 330.53 441.26 329.98 442.19 329.33 442.96 328.64 443.5 327.97 443.76 327.4 443.71 326.98Z" fill="#1a1a1a" fill-rule="evenodd"/>
<line x1="444.98" y1="327.93" x2="444.98" y2="304.3" stroke="#1a1a1a" stroke-width="1" stroke-linecap="butt"/>
<path d="M521.49 327.06 521.66 328 521.41 329.04 520.75 330.06 519.76 330.97 518.53 331.68 517.17 332.13 515.83 332.25 514.64 332.05 513.7 331.55 513.11 330.79 512.94 329.85 513.19 328.81 513.85 327.79 514.84 326.88 516.07 326.17 517.43 325.72 518.77 325.6 519.96 325.8 520.9 326.3ZM520.05 326.75 519.43 326.73 518.59 326.93 517.63 327.32 516.64 327.87 515.71 328.52 514.94 329.21 514.4 329.88 514.14 330.45 514.19 330.87 514.55 331.1 515.17 331.12 516.01 330.92 516.97 330.53 517.96 329.98 518.89 329.33 519.66 328.64 520.2 327.97 520.46 327.4 520.41 326.98Z" fill="#1a1a1a" fill-rule="evenodd"/>
<line x1="521.68" y1="327.93" x2="521.68" y2="305" stroke="#1a1a1a" stroke-width="1" stroke-linecap="butt"/>
<path d="M591.59 323.54 591.76 324.48 591.51 325.51 590.85 326.54 589.86 327.45 588.63 328.16 587.27 328.6 585.93 328.73 584.74 328.53 583.8 328.03 583.21 327.26 583.04 326.32 583.29 325.29 583.95 324.26 584.94 323.35 586.17 322.64 587.53 322.2 588.87 322.07 590.06 322.27 591 322.77ZM590.15 323.23 589.53 323.21 588.69 323.4 587.73 323.8 586.74 324.35 585.81 325 585.04 325.69 584.5 326.35 584.24 326.92 584.29 327.34 584.65 327.57 585.27 327.59 586.11 327.4 587.07 327 588.06 326.45 588.99 325.8 589.76 325.11 590.3 324.45 590.56 323.88 590.51 323.46Z" fill="#1a1a1a" fill-rule="evenodd"/>
<line x1="591.78" y1="324.4" x2="591.78" y2="301.3" stroke="#1a1a1a" stroke-width="1" stroke-linecap="butt"/>
<ellipse cx="647" cy="318.35" rx="4.58" ry="2.96" transform="rotate(-24 647 318.35)" fill="#1a1a1a"/>
<line x1="642.62" y1="319.35" x2="642.62" y2="338.8" stroke="#1a1a1a" stroke-width="1" stroke-linecap="butt"/>
<ellipse cx="675.6" cy="332.45" rx="4.58" ry="2.96" transform="rotate(-24 675.6 332.45)" fill="#1a1a1a"/>
<line x1="679.98" y1="331.45" x2="679.98" y2="308" stroke="#1a1a1a" stroke-width="1" stroke-linecap="butt"/>
<path d="M721.79 334.11 721.96 335.05 721.71 336.09 721.05 337.11 720.06 338.02 718.83 338.73 717.47 339.18 716.13 339.3 714.94 339.1 714 338.6 713.41 337.84 713.24 336.9 713.49 335.86 714.15 334.84 715.14 333.93 716.37 333.22 717.73 332.77 719.07 332.65 720.26 332.85 721.2 333.35ZM720.35 333.8 719.73 333.78 718.89 333.98 717.93 334.37 716.94 334.92 716.01 335.57 715.24 336.26 714.7 336.93 714.44 337.5 714.49 337.92 714.85 338.15 715.47 338.17 716.31 337.97 717.27 337.58 718.26 337.03 719.19 336.38 719.96 335.69 720.5 335.02 720.76 334.45 720.71 334.03Z" fill="#1a1a1a" fill-rule="evenodd"/>
<line x1="721.98" y1="334.98" x2="721.98" y2="312" stroke="#1a1a1a" stroke-width="1" stroke-linecap="butt"/>
<path d="M799.19 309.44 799.36 310.38 799.11 311.41 798.45 312.44 797.46 313.35 796.23 314.06 794.87 314.5 793.53 314.63 792.34 314.43 791.4 313.93 790.81 313.16 790.64 312.22 790.89 311.19 791.55 310.16 792.54 309.25 793.77 308.54 795.13 308.1 796.47 307.97 797.66 308.17 798.6 308.67ZM797.75 309.13 797.13 309.11 796.29 309.3 795.33 309.7 794.34 310.25 793.41 310.9 792.64 311.59 792.1 312.25 791.84 312.82 791.89 313.24 792.25 313.47 792.87 313.49 793.71 313.3 794.67 312.9 795.66 312.35 796.59 311.7 797.36 311.01 797.9 310.35 798.16 309.78 798.11 309.36Z" fill="#1a1a1a" fill-rule="evenodd"/>
<line x1="790.62" y1="312.3" x2="790.62" y2="335.8" stroke="#1a1a1a" stroke-width="1" stroke-linecap="butt"/>
<path d="M866.79 320.01 866.96 320.95 866.71 321.99 866.05 323.01 865.06 323.92 863.83 324.63 862.47 325.08 861.13 325.2 859.94 325 859 324.5 858.41 323.74 858.24 322.8 858.49 321.76 859.15 320.74 860.14 319.83 861.37 319.12 862.73 318.67 864.07 318.55 865.26 318.75 866.2 319.25ZM865.35 319.7 864.73 319.68 863.89 319.88 862.93 320.27 861.94 320.82 861.01 321.47 860.24 322.16 859.7 322.83 859.44 323.4 859.49 323.82 859.85 324.05 860.47 324.07 861.31 323.87 862.27 323.48 863.26 322.93 864.19 322.28 864.96 321.59 865.5 320.92 865.76 320.35 865.71 319.93Z" fill="#1a1a1a" fill-rule="evenodd"/>
<line x1="866.98" y1="320.88" x2="866.98" y2="298.8" stroke="#1a1a1a" stroke-width="1" stroke-linecap="butt"/>
<line x1="433.82" y1="396" x2="446.98" y2="396" stroke="#1a1a1a" stroke-width="1" stroke-linecap="butt"/>
<path d="M444.59 394.14 444.76 395.08 444.51 396.11 443.85 397.14 442.86 398.05 441.63 398.76 440.27 399.2 438.93 399.33 437.74 399.13 436.8 398.63 436.21 397.86 436.04 396.92 436.29 395.89 436.95 394.86 437.94 393.95 439.17 393.24 440.53 392.8 441.87 392.67 443.06 392.87 444 393.37ZM443.15 393.83 442.53 393.81 441.69 394 440.73 394.4 439.74 394.95 438.81 395.6 438.04 396.29 437.5 396.95 437.24 397.52 437.29 397.94 437.65 398.17 438.27 398.19 439.11 398 440.07 397.6 441.06 397.05 441.99 396.4 442.76 395.71 443.3 395.05 443.56 394.48 443.51 394.06Z" fill="#1a1a1a" fill-rule="evenodd"/>
<line x1="444.78" y1="395" x2="444.78" y2="371.5" stroke="#1a1a1a" stroke-width="1" stroke-linecap="butt"/>
<path d="M521.49 387.09 521.66 388.03 521.41 389.06 520.75 390.09 519.76 391 518.53 391.71 517.17 392.15 515.83 392.28 514.64 392.08 513.7 391.58 513.11 390.81 512.94 389.87 513.19 388.84 513.85 387.81 514.84 386.9 516.07 386.19 517.43 385.75 518.77 385.62 519.96 385.82 520.9 386.32ZM520.05 386.78 519.43 386.76 518.59 386.95 517.63 387.35 516.64 387.9 515.71 388.55 514.94 389.24 514.4 389.9 514.14 390.47 514.19 390.89 514.55 391.12 515.17 391.14 516.01 390.95 516.97 390.55 517.96 390 518.89 389.35 519.66 388.66 520.2 388 520.46 387.43 520.41 387.01Z" fill="#1a1a1a" fill-rule="evenodd"/>
<line x1="521.68" y1="387.95" x2="521.68" y2="364.95" stroke="#1a1a1a" stroke-width="1" stroke-linecap="butt"/>
<path d="M591.19 383.56 591.36 384.5 591.11 385.54 590.45 386.56 589.46 387.47 588.23 388.18 586.87 388.63 585.53 388.75 584.34 388.55 583.4 388.05 582.81 387.29 582.64 386.35 582.89 385.31 583.55 384.29 584.54 383.38 585.77 382.67 587.13 382.22 588.47 382.1 589.66 382.3 590.6 382.8ZM589.75 383.25 589.13 383.23 588.29 383.43 587.33 383.82 586.34 384.37 585.41 385.02 584.64 385.71 584.1 386.38 583.84 386.95 583.89 387.37 584.25 387.6 584.87 387.62 585.71 387.42 586.67 387.03 587.66 386.48 588.59 385.83 589.36 385.14 589.9 384.47 590.16 383.9 590.11 383.48Z" fill="#1a1a1a" fill-rule="evenodd"/>
<line x1="591.38" y1="384.43" x2="591.38" y2="361.43" stroke="#1a1a1a" stroke-width="1" stroke-linecap="butt"/>
<ellipse cx="647" cy="378.38" rx="4.58" ry="2.96" transform="rotate(-24 647 378.38)" fill="#1a1a1a"/>
<line x1="651.38" y1="377.38" x2="651.38" y2="355.38" stroke="#1a1a1a" stroke-width="1" stroke-linecap="butt"/>
<ellipse cx="675.6" cy="392.48" rx="4.58" ry="2.96" transform="rotate(-24 675.6 392.48)" fill="#1a1a1a"/>
<line x1="679.98" y1="391.48" x2="679.98" y2="367.98" stroke="#1a1a1a" stroke-width="1" stroke-linecap="butt"/>
<line x1="711.42" y1="396" x2="724.58" y2="396" stroke="#1a1a1a" stroke-width="1" stroke-linecap="butt"/>
<path d="M722.19 394.14 722.36 395.08 722.11 396.11 721.45 397.14 720.46 398.05 719.23 398.76 717.87 399.2 716.53 399.33 715.34 399.13 714.4 398.63 713.81 397.86 713.64 396.92 713.89 395.89 714.55 394.86 715.54 393.95 716.77 393.24 718.13 392.8 719.47 392.67 720.66 392.87 721.6 393.37ZM720.75 393.83 720.13 393.81 719.29 394 718.33 394.4 717.34 394.95 716.41 395.6 715.64 396.29 715.1 396.95 714.84 397.52 714.89 397.94 715.25 398.17 715.87 398.19 716.71 398 717.67 397.6 718.66 397.05 719.59 396.4 720.36 395.71 720.9 395.05 721.16 394.48 721.11 394.06Z" fill="#1a1a1a" fill-rule="evenodd"/>
<line x1="722.38" y1="395" x2="722.38" y2="371.5" stroke="#1a1a1a" stroke-width="1" stroke-linecap="butt"/>
<line x1="788.42" y1="396" x2="801.58" y2="396" stroke="#1a1a1a" stroke-width="1" stroke-linecap="butt"/>
<path d="M799.19 394.14 799.36 395.08 799.11 396.11 798.45 397.14 797.46 398.05 796.23 398.76 794.87 399.2 793.53 399.33 792.34 399.13 791.4 398.63 790.81 397.86 790.64 396.92 790.89 395.89 791.55 394.86 792.54 393.95 793.77 393.24 795.13 392.8 796.47 392.67 797.66 392.87 798.6 393.37ZM797.75 393.83 797.13 393.81 796.29 394 795.33 394.4 794.34 394.95 793.41 395.6 792.64 396.29 792.1 396.95 791.84 397.52 791.89 397.94 792.25 398.17 792.87 398.19 793.71 398 794.67 397.6 795.66 397.05 796.59 396.4 797.36 395.71 797.9 395.05 798.16 394.48 798.11 394.06Z" fill="#1a1a1a" fill-rule="evenodd"/>
<line x1="799.38" y1="395" x2="799.38" y2="371.5" stroke="#1a1a1a" stroke-width="1" stroke-linecap="butt"/>
<path d="M866.79 380.04 866.96 380.98 866.71 382.01 866.05 383.04 865.06 383.95 863.83 384.66 862.47 385.1 861.13 385.23 859.94 385.03 859 384.53 858.41 383.76 858.24 382.82 858.49 381.79 859.15 380.76 860.14 379.85 861.37 379.14 862.73 378.7 864.07 378.57 865.26 378.77 866.2 379.27ZM865.35 379.73 864.73 379.71 863.89 379.9 862.93 380.3 861.94 380.85 861.01 381.5 860.24 382.19 859.7 382.85 859.44 383.42 859.49 383.84 859.85 384.07 860.47 384.09 861.31 383.9 862.27 383.5 863.26 382.95 864.19 382.3 864.96 381.61 865.5 380.95 865.76 380.38 865.71 379.96Z" fill="#1a1a1a" fill-rule="evenodd"/>
<line x1="866.98" y1="380.9" x2="866.98" y2="357.4" stroke="#1a1a1a" stroke-width="1" stroke-linecap="butt"/>
<line x1="433.82" y1="452.75" x2="446.98" y2="452.75" stroke="#1a1a1a" stroke-width="1" stroke-linecap="butt"/>
<path d="M444.59 450.89 444.76 451.83 444.51 452.86 443.85 453.89 442.86 454.8 441.63 455.51 440.27 455.95 438.93 456.08 437.74 455.88 436.8 455.38 436.21 454.61 436.04 453.67 436.29 452.64 436.95 451.61 437.94 450.7 439.17 449.99 440.53 449.55 441.87 449.42 443.06 449.62 444 450.12ZM443.15 450.58 442.53 450.56 441.69 450.75 440.73 451.15 439.74 451.7 438.81 452.35 438.04 453.04 437.5 453.7 437.24 454.27 437.29 454.69 437.65 454.92 438.27 454.94 439.11 454.75 440.07 454.35 441.06 453.8 441.99 453.15 442.76 452.46 443.3 451.8 443.56 451.23 443.51 450.81Z" fill="#1a1a1a" fill-rule="evenodd"/>
<line x1="444.78" y1="451.75" x2="444.78" y2="428.25" stroke="#1a1a1a" stroke-width="1" stroke-linecap="butt"/>
<path d="M521.49 443.84 521.66 444.78 521.41 445.81 520.75 446.84 519.76 447.75 518.53 448.46 517.17 448.9 515.83 449.03 514.64 448.83 513.7 448.33 513.11 447.56 512.94 446.62 513.19 445.59 513.85 444.56 514.84 443.65 516.07 442.94 517.43 442.5 518.77 442.37 519.96 442.57 520.9 443.07ZM520.05 443.53 519.43 443.51 518.59 443.7 517.63 444.1 516.64 444.65 515.71 445.3 514.94 445.99 514.4 446.65 514.14 447.22 514.19 447.64 514.55 447.87 515.17 447.89 516.01 447.7 516.97 447.3 517.96 446.75 518.89 446.1 519.66 445.41 520.2 444.75 520.46 444.18 520.41 443.76Z" fill="#1a1a1a" fill-rule="evenodd"/>
<line x1="521.68" y1="444.7" x2="521.68" y2="421.7" stroke="#1a1a1a" stroke-width="1" stroke-linecap="butt"/>
<path d="M591.19 440.31 591.36 441.25 591.11 442.29 590.45 443.31 589.46 444.22 588.23 444.93 586.87 445.38 585.53 445.5 584.34 445.3 583.4 444.8 582.81 444.04 582.64 443.1 582.89 442.06 583.55 441.04 584.54 440.13 585.77 439.42 587.13 438.97 588.47 438.85 589.66 439.05 590.6 439.55ZM589.75 440 589.13 439.98 588.29 440.18 587.33 440.57 586.34 441.12 585.41 441.77 584.64 442.46 584.1 443.13 583.84 443.7 583.89 444.12 584.25 444.35 584.87 444.37 585.71 444.17 586.67 443.78 587.66 443.23 588.59 442.58 589.36 441.89 589.9 441.22 590.16 440.65 590.11 440.23Z" fill="#1a1a1a" fill-rule="evenodd"/>
<line x1="591.38" y1="441.18" x2="591.38" y2="418.18" stroke="#1a1a1a" stroke-width="1" stroke-linecap="butt"/>
<ellipse cx="647" cy="435.12" rx="4.58" ry="2.96" transform="rotate(-24 647 435.12)" fill="#1a1a1a"/>
<line x1="651.38" y1="434.12" x2="651.38" y2="412.12" stroke="#1a1a1a" stroke-width="1" stroke-linecap="butt"/>
<ellipse cx="675.6" cy="449.23" rx="4.58" ry="2.96" transform="rotate(-24 675.6 449.23)" fill="#1a1a1a"/>
<line x1="679.98" y1="448.23" x2="679.98" y2="424.73" stroke="#1a1a1a" stroke-width="1" stroke-linecap="butt"/>
<line x1="711.42" y1="452.75" x2="724.58" y2="452.75" stroke="#1a1a1a" stroke-width="1" stroke-linecap="butt"/>
<path d="M722.19 450.89 722.36 451.83 722.11 452.86 721.45 453.89 720.46 454.8 719.23 455.51 717.87 455.95 716.53 456.08 715.34 455.88 714.4 455.38 713.81 454.61 713.64 453.67 713.89 452.64 714.55 451.61 715.54 450.7 716.77 449.99 718.13 449.55 719.47 449.42 720.66 449.62 721.6 450.12ZM720.75 450.58 720.13 450.56 719.29 450.75 718.33 451.15 717.34 451.7 716.41 452.35 715.64 453.04 715.1 453.7 714.84 454.27 714.89 454.69 715.25 454.92 715.87 454.94 716.71 454.75 717.67 454.35 718.66 453.8 719.59 453.15 720.36 452.46 720.9 451.8 721.16 451.23 721.11 450.81Z" fill="#1a1a1a" fill-rule="evenodd"/>
<line x1="722.38" y1="451.75" x2="722.38" y2="428.25" stroke="#1a1a1a" stroke-width="1" stroke-linecap="butt"/>
<line x1="788.42" y1="452.75" x2="801.58" y2="452.75" stroke="#1a1a1a" stroke-width="1" stroke-linecap="butt"/>
<path d="M799.19 450.89 799.36 451.83 799.11 452.86 798.45 453.89 797.46 454.8 796.23 455.51 794.87 455.95 793.53 456.08 792.34 455.88 791.4 455.38 790.81 454.61 790.64 453.67 790.89 452.64 791.55 451.61 792.54 450.7 793.77 449.99 795.13 449.55 796.47 449.42 797.66 449.62 798.6 450.12ZM797.75 450.58 797.13 450.56 796.29 450.75 795.33 451.15 794.34 451.7 793.41 452.35 792.64 453.04 792.1 453.7 791.84 454.27 791.89 454.69 792.25 454.92 792.87 454.94 793.71 454.75 794.67 454.35 795.66 453.8 796.59 453.15 797.36 452.46 797.9 451.8 798.16 451.23 798.11 450.81Z" fill="#1a1a1a" fill-rule="evenodd"/>
<line x1="799.38" y1="451.75" x2="799.38" y2="428.25" stroke="#1a1a1a" stroke-width="1" stroke-linecap="butt"/>
<path d="M866.79 436.79 866.96 437.73 866.71 438.76 866.05 439.79 865.06 440.7 863.83 441.41 862.47 441.85 861.13 441.98 859.94 441.78 859 441.28 858.41 440.51 858.24 439.57 858.49 438.54 859.15 437.51 860.14 436.6 861.37 435.89 862.73 435.45 864.07 435.32 865.26 435.52 866.2 436.02ZM865.35 436.48 864.73 436.46 863.89 436.65 862.93 437.05 861.94 437.6 861.01 438.25 860.24 438.94 859.7 439.6 859.44 440.17 859.49 440.59 859.85 440.82 860.47 440.84 861.31 440.65 862.27 440.25 863.26 439.7 864.19 439.05 864.96 438.36 865.5 437.7 865.76 437.13 865.71 436.71Z" fill="#1a1a1a" fill-rule="evenodd"/>
<line x1="866.98" y1="437.65" x2="866.98" y2="414.15" stroke="#1a1a1a" stroke-width="1" stroke-linecap="butt"/>
<line x1="304.5" y1="516.4" x2="887" y2="516.4" stroke="#333333" stroke-width="1.2" stroke-linecap="butt"/>
<line x1="304.5" y1="523.45" x2="887" y2="523.45" stroke="#333333" stroke-width="1.2" stroke-linecap="butt"/>
<line x1="304.5" y1="530.5" x2="887" y2="530.5" stroke="#333333" stroke-width="1.2" stroke-linecap="butt"/>
<line x1="304.5" y1="537.55" x2="887" y2="537.55" stroke="#333333" stroke-width="1.2" stroke-linecap="butt"/>
<line x1="304.5" y1="516" x2="304.5" y2="540" stroke="#1a1a1a" stroke-width="1.1" stroke-linecap="butt"/>
<rect x="298.2" y="509.2" width="3.6" height="32" fill="#1a1a1a"/>
<path d="M298.2 511.2 L298.2 508.5 C303.2 508.5 307.7 507.2 310.9 503.7 C309.4 508.7 305.4 511.5 301.8 511.5 Z" fill="#1a1a1a"/>
<path d="M298.2 516.1 H294 V540" fill="none" stroke="#151515" stroke-width="1.15"/>
<path d="M318.02 540.37 317.97 540.12 317.89 539.82 317.79 539.48 317.69 539.1 317.6 538.71 317.53 538.31 317.48 537.92 317.48 537.56 317.51 537.25 317.59 536.98 317.71 536.66 317.87 536.27 318.07 535.86 318.3 535.43 318.56 535.02 318.82 534.63 319.1 534.28 319.36 534 319.6 533.81 319.78 533.7 319.98 533.62 320.22 533.54 320.49 533.47 320.79 533.42 321.09 533.4 321.39 533.41 321.67 533.44 321.92 533.5 322.13 533.57 322.29 533.67 322.48 533.81 322.73 534.04 323.02 534.33 323.32 534.67 323.6 535.04 323.86 535.43 324.09 535.82 324.26 536.18 324.38 536.5 324.45 536.75 324.5 537.03 324.52 537.4 324.52 537.83 324.49 538.3 324.43 538.79 324.34 539.28 324.22 539.74 324.09 540.17 323.94 540.55 323.78 540.85 323.6 541.14 323.36 541.45 323.08 541.77 322.75 542.08 322.39 542.37 322.02 542.63 321.63 542.85 321.24 543.02 320.87 543.15 320.52 543.21 320.13 543.22 319.68 543.19 319.17 543.1 318.64 542.96 318.1 542.78 317.57 542.55 317.07 542.3 316.6 542.01 316.19 541.72 315.85 541.41 315.54 541.07 315.23 540.66 314.95 540.21 314.68 539.72 314.44 539.2 314.24 538.67 314.07 538.14 313.94 537.61 313.84 537.11 313.78 536.63 313.76 536.15 313.77 535.62 313.82 535.05 313.9 534.44 314.02 533.81 314.16 533.16 314.34 532.49 314.54 531.83 314.77 531.17 315 530.55 315.25 529.96 315.54 529.37 315.88 528.77 316.25 528.14 316.66 527.51 317.09 526.87 317.53 526.23 317.99 525.57 318.45 524.91 318.88 524.26 319.31 523.64 319.75 523.02 320.22 522.39 320.69 521.76 321.17 521.14 321.64 520.51 322.1 519.88 322.54 519.25 322.95 518.63 323.32 518.01 323.65 517.41 323.96 516.83 324.26 516.25 324.54 515.67 324.79 515.1 325.01 514.53 325.21 513.96 325.36 513.39 325.47 512.82 325.53 512.25 325.53 511.65 325.45 511.05 325.33 510.47 325.16 509.9 324.96 509.37 324.73 508.88 324.49 508.43 324.24 508.02 323.96 507.67 323.6 507.34 323.11 507.11 322.59 507.05 322.13 507.13 321.71 507.29 321.33 507.49 320.97 507.74 320.63 508.03 320.31 508.35 320.01 508.7 319.74 509.07 319.49 509.47 319.25 509.9 319.01 510.37 318.78 510.88 318.57 511.42 318.38 512 318.21 512.6 318.07 513.23 317.97 513.87 317.91 514.53 317.91 515.18 317.95 515.81 318.03 516.44 318.14 517.06 318.28 517.69 318.43 518.34 318.6 519.03 318.76 519.77 318.93 520.57 319.09 521.45 319.26 522.43 319.44 523.48 319.63 524.61 319.83 525.79 320.03 527.01 320.24 528.27 320.45 529.55 320.66 530.84 320.86 532.13 321.05 533.41 321.25 534.73 321.46 536.13 321.67 537.59 321.88 539.07 322.08 540.54 322.28 541.98 322.46 543.36 322.63 544.64 322.77 545.79 322.89 546.79 322.98 547.64 323.07 548.35 323.14 548.95 323.19 549.45 323.22 549.87 323.24 550.22 323.23 550.54 323.21 550.84 323.16 551.15 323.09 551.5 322.99 551.87 322.87 552.24 322.73 552.59 322.56 552.93 322.38 553.25 322.19 553.54 321.99 553.8 321.78 554.03 321.58 554.21 321.39 554.35 321.18 554.45 320.93 554.54 320.64 554.61 320.31 554.65 319.96 554.68 319.61 554.68 319.26 554.66 318.93 554.63 318.63 554.59 318.4 554.54 318.22 554.49 318.04 554.4 317.83 554.26 317.62 554.09 317.4 553.9 317.19 553.69 317 553.48 316.81 553.29 316.64 553.11 316.49 552.97 315.59 553.85 315.68 553.96 315.79 554.13 315.95 554.34 316.13 554.59 316.33 554.87 316.57 555.15 316.85 555.43 317.16 555.69 317.52 555.93 317.91 556.09 318.3 556.19 318.7 556.27 319.13 556.32 319.57 556.34 320.03 556.33 320.49 556.3 320.96 556.22 321.41 556.11 321.85 555.94 322.26 555.72 322.62 555.45 322.94 555.13 323.23 554.79 323.49 554.42 323.73 554.02 323.93 553.6 324.12 553.16 324.27 552.71 324.4 552.26 324.5 551.8 324.57 551.36 324.61 550.96 324.62 550.56 324.6 550.16 324.56 549.75 324.5 549.3 324.43 548.78 324.34 548.19 324.25 547.48 324.14 546.64 324.01 545.63 323.86 544.47 323.68 543.19 323.49 541.81 323.29 540.37 323.08 538.9 322.87 537.42 322.67 535.96 322.48 534.55 322.31 533.23 322.14 531.95 321.97 530.65 321.81 529.36 321.64 528.07 321.48 526.8 321.34 525.57 321.2 524.39 321.08 523.26 320.97 522.2 320.88 521.22 320.81 520.32 320.75 519.49 320.71 518.73 320.68 518.04 320.67 517.4 320.66 516.81 320.68 516.26 320.71 515.75 320.74 515.24 320.79 514.74 320.86 514.24 320.94 513.74 321.03 513.25 321.14 512.76 321.26 512.28 321.38 511.83 321.52 511.4 321.66 511 321.8 510.64 321.93 510.33 322.06 510.06 322.2 509.8 322.34 509.56 322.49 509.34 322.62 509.16 322.73 509.03 322.8 508.95 322.79 508.92 322.69 508.89 322.58 508.82 322.58 508.84 322.68 509 322.8 509.27 322.91 509.62 323.02 510.02 323.11 510.44 323.17 510.88 323.2 511.32 323.21 511.72 323.19 512.09 323.14 512.47 323.07 512.89 322.97 513.33 322.84 513.8 322.68 514.29 322.5 514.8 322.28 515.31 322.03 515.84 321.76 516.38 321.45 516.91 321.12 517.43 320.73 517.96 320.3 518.51 319.83 519.07 319.33 519.64 318.81 520.22 318.28 520.82 317.75 521.42 317.22 522.03 316.72 522.64 316.23 523.22 315.73 523.8 315.2 524.39 314.67 524.98 314.13 525.6 313.6 526.23 313.08 526.89 312.58 527.58 312.12 528.3 311.72 529.04 311.37 529.78 311.04 530.53 310.74 531.3 310.47 532.09 310.23 532.9 310.04 533.72 309.89 534.55 309.8 535.39 309.78 536.23 309.84 537.06 309.98 537.87 310.2 538.67 310.48 539.44 310.82 540.18 311.21 540.88 311.64 541.56 312.11 542.19 312.61 542.79 313.14 543.34 313.69 543.84 314.3 544.3 314.95 544.71 315.63 545.07 316.34 545.39 317.07 545.67 317.81 545.89 318.54 546.07 319.28 546.2 320.01 546.27 320.73 546.27 321.45 546.2 322.15 546.05 322.84 545.84 323.52 545.58 324.17 545.26 324.79 544.9 325.38 544.49 325.94 544.04 326.45 543.54 326.91 542.99 327.31 542.38 327.66 541.73 327.96 541.04 328.2 540.32 328.4 539.59 328.55 538.84 328.64 538.09 328.67 537.33 328.62 536.57 328.5 535.81 328.26 535.06 327.94 534.36 327.55 533.71 327.11 533.1 326.63 532.53 326.13 532.01 325.6 531.54 325.05 531.11 324.49 530.74 323.89 530.43 323.26 530.2 322.61 530.05 321.97 529.99 321.34 529.99 320.72 530.05 320.11 530.17 319.53 530.35 318.97 530.58 318.44 530.88 317.94 531.25 317.48 531.7 317.1 532.21 316.77 532.75 316.5 533.32 316.26 533.89 316.05 534.48 315.89 535.06 315.76 535.63 315.67 536.18 315.62 536.71 315.64 537.26 315.74 537.8 315.9 538.3 316.1 538.76 316.31 539.19 316.53 539.58 316.74 539.93 316.92 540.23 317.07 540.47 317.16 540.66Z" fill="#1a1a1a"/>
<path d="M319.42 552 319.23 552.97 318.68 553.8 317.86 554.35 316.89 554.54 315.91 554.35 315.09 553.8 314.54 552.97 314.35 552 314.54 551.03 315.09 550.21 315.91 549.66 316.89 549.46 317.86 549.66 318.68 550.21 319.23 551.03Z" fill="#1a1a1a"/>
<path d="M336.95 507.41 V525.99 M339.45 506.81 V525.39" stroke="#3a3a3a" stroke-width="0.7" fill="none"/>
<path d="M334.85 512.67 L341.55 510.88 V513.08 L334.85 514.88 Z" fill="#1a1a1a"/>
<path d="M334.85 519.72 L341.55 517.92 V520.12 L334.85 521.92 Z" fill="#1a1a1a"/>
<path d="M345.05 517.99 V536.56 M347.55 517.39 V535.96" stroke="#3a3a3a" stroke-width="0.7" fill="none"/>
<path d="M342.95 523.25 L349.65 521.45 V523.65 L342.95 525.45 Z" fill="#1a1a1a"/>
<path d="M342.95 530.3 L349.65 528.5 V530.7 L342.95 532.5 Z" fill="#1a1a1a"/>
<path d="M352.75 503.89 V522.46 M355.25 503.29 V521.86" stroke="#3a3a3a" stroke-width="0.7" fill="none"/>
<path d="M350.65 509.15 L357.35 507.35 V509.55 L350.65 511.35 Z" fill="#1a1a1a"/>
<path d="M350.65 516.2 L357.35 514.4 V516.6 L350.65 518.4 Z" fill="#1a1a1a"/>
<path d="M360.55 514.46 V533.04 M363.05 513.86 V532.44" stroke="#3a3a3a" stroke-width="0.7" fill="none"/>
<path d="M358.45 519.72 L365.15 517.92 V520.12 L358.45 521.92 Z" fill="#1a1a1a"/>
<path d="M358.45 526.77 L365.15 524.97 V527.17 L358.45 528.97 Z" fill="#1a1a1a"/>
<text x="247" y="535.3" font-family="'Liberation Serif', serif" font-size="13.6" font-weight="400" fill="#444" textLength="37.5" lengthAdjust="spacingAndGlyphs">Vln. 1</text>
<text x="302.3" y="503" font-family="'Liberation Serif', serif" font-size="10" font-weight="400" font-style="italic" fill="#555">5</text>
<line x1="488.8" y1="516.4" x2="488.8" y2="540" stroke="#1a1a1a" stroke-width="1.8" stroke-linecap="butt"/>
<line x1="611.2" y1="516.4" x2="611.2" y2="540" stroke="#1a1a1a" stroke-width="1.8" stroke-linecap="butt"/>
<line x1="733" y1="516.4" x2="733" y2="540" stroke="#1a1a1a" stroke-width="1.8" stroke-linecap="butt"/>
<line x1="837.8" y1="516.4" x2="837.8" y2="540" stroke="#1a1a1a" stroke-width="1.8" stroke-linecap="butt"/>
<ellipse cx="387.6" cy="537.55" rx="4.58" ry="2.96" transform="rotate(-24 387.6 537.55)" fill="#1a1a1a"/>
<line x1="391.98" y1="536.55" x2="391.98" y2="512.8" stroke="#1a1a1a" stroke-width="1" stroke-linecap="butt"/>
<line x1="418.8" y1="523.5" x2="418.8" y2="540" stroke="#1a1a1a" stroke-width="1" stroke-linecap="butt"/>
<line x1="452.5" y1="523.5" x2="452.5" y2="540" stroke="#1a1a1a" stroke-width="1" stroke-linecap="butt"/>
<path d="M452.05 523.5 C452.9 529 461.5 533 457.5 544 C459.7 536.5 455 533.1 452.05 531.7 Z" fill="#1a1a1a" stroke="#1a1a1a" stroke-width="0.3"/>
<line x1="470.5" y1="526.5" x2="470.5" y2="540" stroke="#1a1a1a" stroke-width="1" stroke-linecap="butt"/>
<line x1="507.5" y1="527" x2="507.5" y2="540" stroke="#1a1a1a" stroke-width="1" stroke-linecap="butt"/>
<line x1="547.5" y1="523.5" x2="547.5" y2="540" stroke="#1a1a1a" stroke-width="1" stroke-linecap="butt"/>
<path d="M547.05 523.5 C547.9 529 556.5 533 552.5 544 C554.7 536.5 550 533.1 547.05 531.7 Z" fill="#1a1a1a" stroke="#1a1a1a" stroke-width="0.3"/>
<line x1="565.5" y1="527" x2="565.5" y2="540" stroke="#1a1a1a" stroke-width="1" stroke-linecap="butt"/>
<ellipse cx="629.4" cy="537.55" rx="4.58" ry="2.96" transform="rotate(-24 629.4 537.55)" fill="#1a1a1a"/>
<line x1="633.78" y1="536.55" x2="633.78" y2="512.8" stroke="#1a1a1a" stroke-width="1" stroke-linecap="butt"/>
<line x1="660.5" y1="523.5" x2="660.5" y2="540" stroke="#1a1a1a" stroke-width="1" stroke-linecap="butt"/>
<line x1="693.8" y1="521" x2="693.8" y2="540" stroke="#1a1a1a" stroke-width="1" stroke-linecap="butt"/>
<path d="M693.35 521 C694.2 526.5 702.8 530.5 698.8 541.5 C701 534 696.3 530.6 693.35 529.2 Z" fill="#1a1a1a" stroke="#1a1a1a" stroke-width="0.3"/>
<ellipse cx="710.2" cy="537.55" rx="4.58" ry="2.96" transform="rotate(-24 710.2 537.55)" fill="#1a1a1a"/>
<line x1="714.58" y1="536.55" x2="714.58" y2="512.8" stroke="#1a1a1a" stroke-width="1" stroke-linecap="butt"/>
<ellipse cx="747.3" cy="537.55" rx="4.58" ry="2.96" transform="rotate(-24 747.3 537.55)" fill="#1a1a1a"/>
<line x1="751.68" y1="536.55" x2="751.68" y2="513" stroke="#1a1a1a" stroke-width="1" stroke-linecap="butt"/>
<circle cx="757.08" cy="534.02" r="1.35" fill="#1a1a1a"/>
<ellipse cx="781.2" cy="534.02" rx="4.58" ry="2.96" transform="rotate(-24 781.2 534.02)" fill="#1a1a1a"/>
<line x1="785.58" y1="533.02" x2="785.58" y2="510.5" stroke="#1a1a1a" stroke-width="1" stroke-linecap="butt"/>
<path d="M785.13 510.5 C785.98 516 794.58 520 790.58 531 C792.78 523.5 788.08 520.1 785.13 518.7 Z" fill="#1a1a1a" stroke="#1a1a1a" stroke-width="0.3"/>
<path d="M805.19 528.64 805.36 529.58 805.11 530.61 804.45 531.64 803.46 532.55 802.23 533.26 800.87 533.7 799.53 533.83 798.34 533.63 797.4 533.13 796.81 532.36 796.64 531.42 796.89 530.39 797.55 529.36 798.54 528.45 799.77 527.74 801.13 527.3 802.47 527.17 803.66 527.37 804.6 527.87ZM803.75 528.33 803.13 528.31 802.29 528.5 801.33 528.9 800.34 529.45 799.41 530.1 798.64 530.79 798.1 531.45 797.84 532.02 797.89 532.44 798.25 532.67 798.87 532.69 799.71 532.5 800.67 532.1 801.66 531.55 802.59 530.9 803.36 530.21 803.9 529.55 804.16 528.98 804.11 528.56Z" fill="#1a1a1a" fill-rule="evenodd"/>
<line x1="796.62" y1="531.5" x2="796.62" y2="540" stroke="#1a1a1a" stroke-width="1" stroke-linecap="butt"/>
<ellipse cx="852.7" cy="537.55" rx="4.58" ry="2.96" transform="rotate(-24 852.7 537.55)" fill="#1a1a1a"/>
<line x1="857.08" y1="536.55" x2="857.08" y2="515" stroke="#1a1a1a" stroke-width="1" stroke-linecap="butt"/>
<ellipse cx="870.2" cy="534.02" rx="4.58" ry="2.96" transform="rotate(-24 870.2 534.02)" fill="#1a1a1a"/>
<line x1="874.58" y1="533.02" x2="874.58" y2="515" stroke="#1a1a1a" stroke-width="1" stroke-linecap="butt"/>
<path d="M856 513 L890 513 V516.7 L856 516.7 Z" fill="#1a1a1a"/>
<rect x="0" y="537.2" width="887" height="1.1" fill="#1c1c1c"/>
<rect x="0" y="538.3" width="887" height="6" fill="#ffffff"/>
</svg>
</div>
</body></html>
